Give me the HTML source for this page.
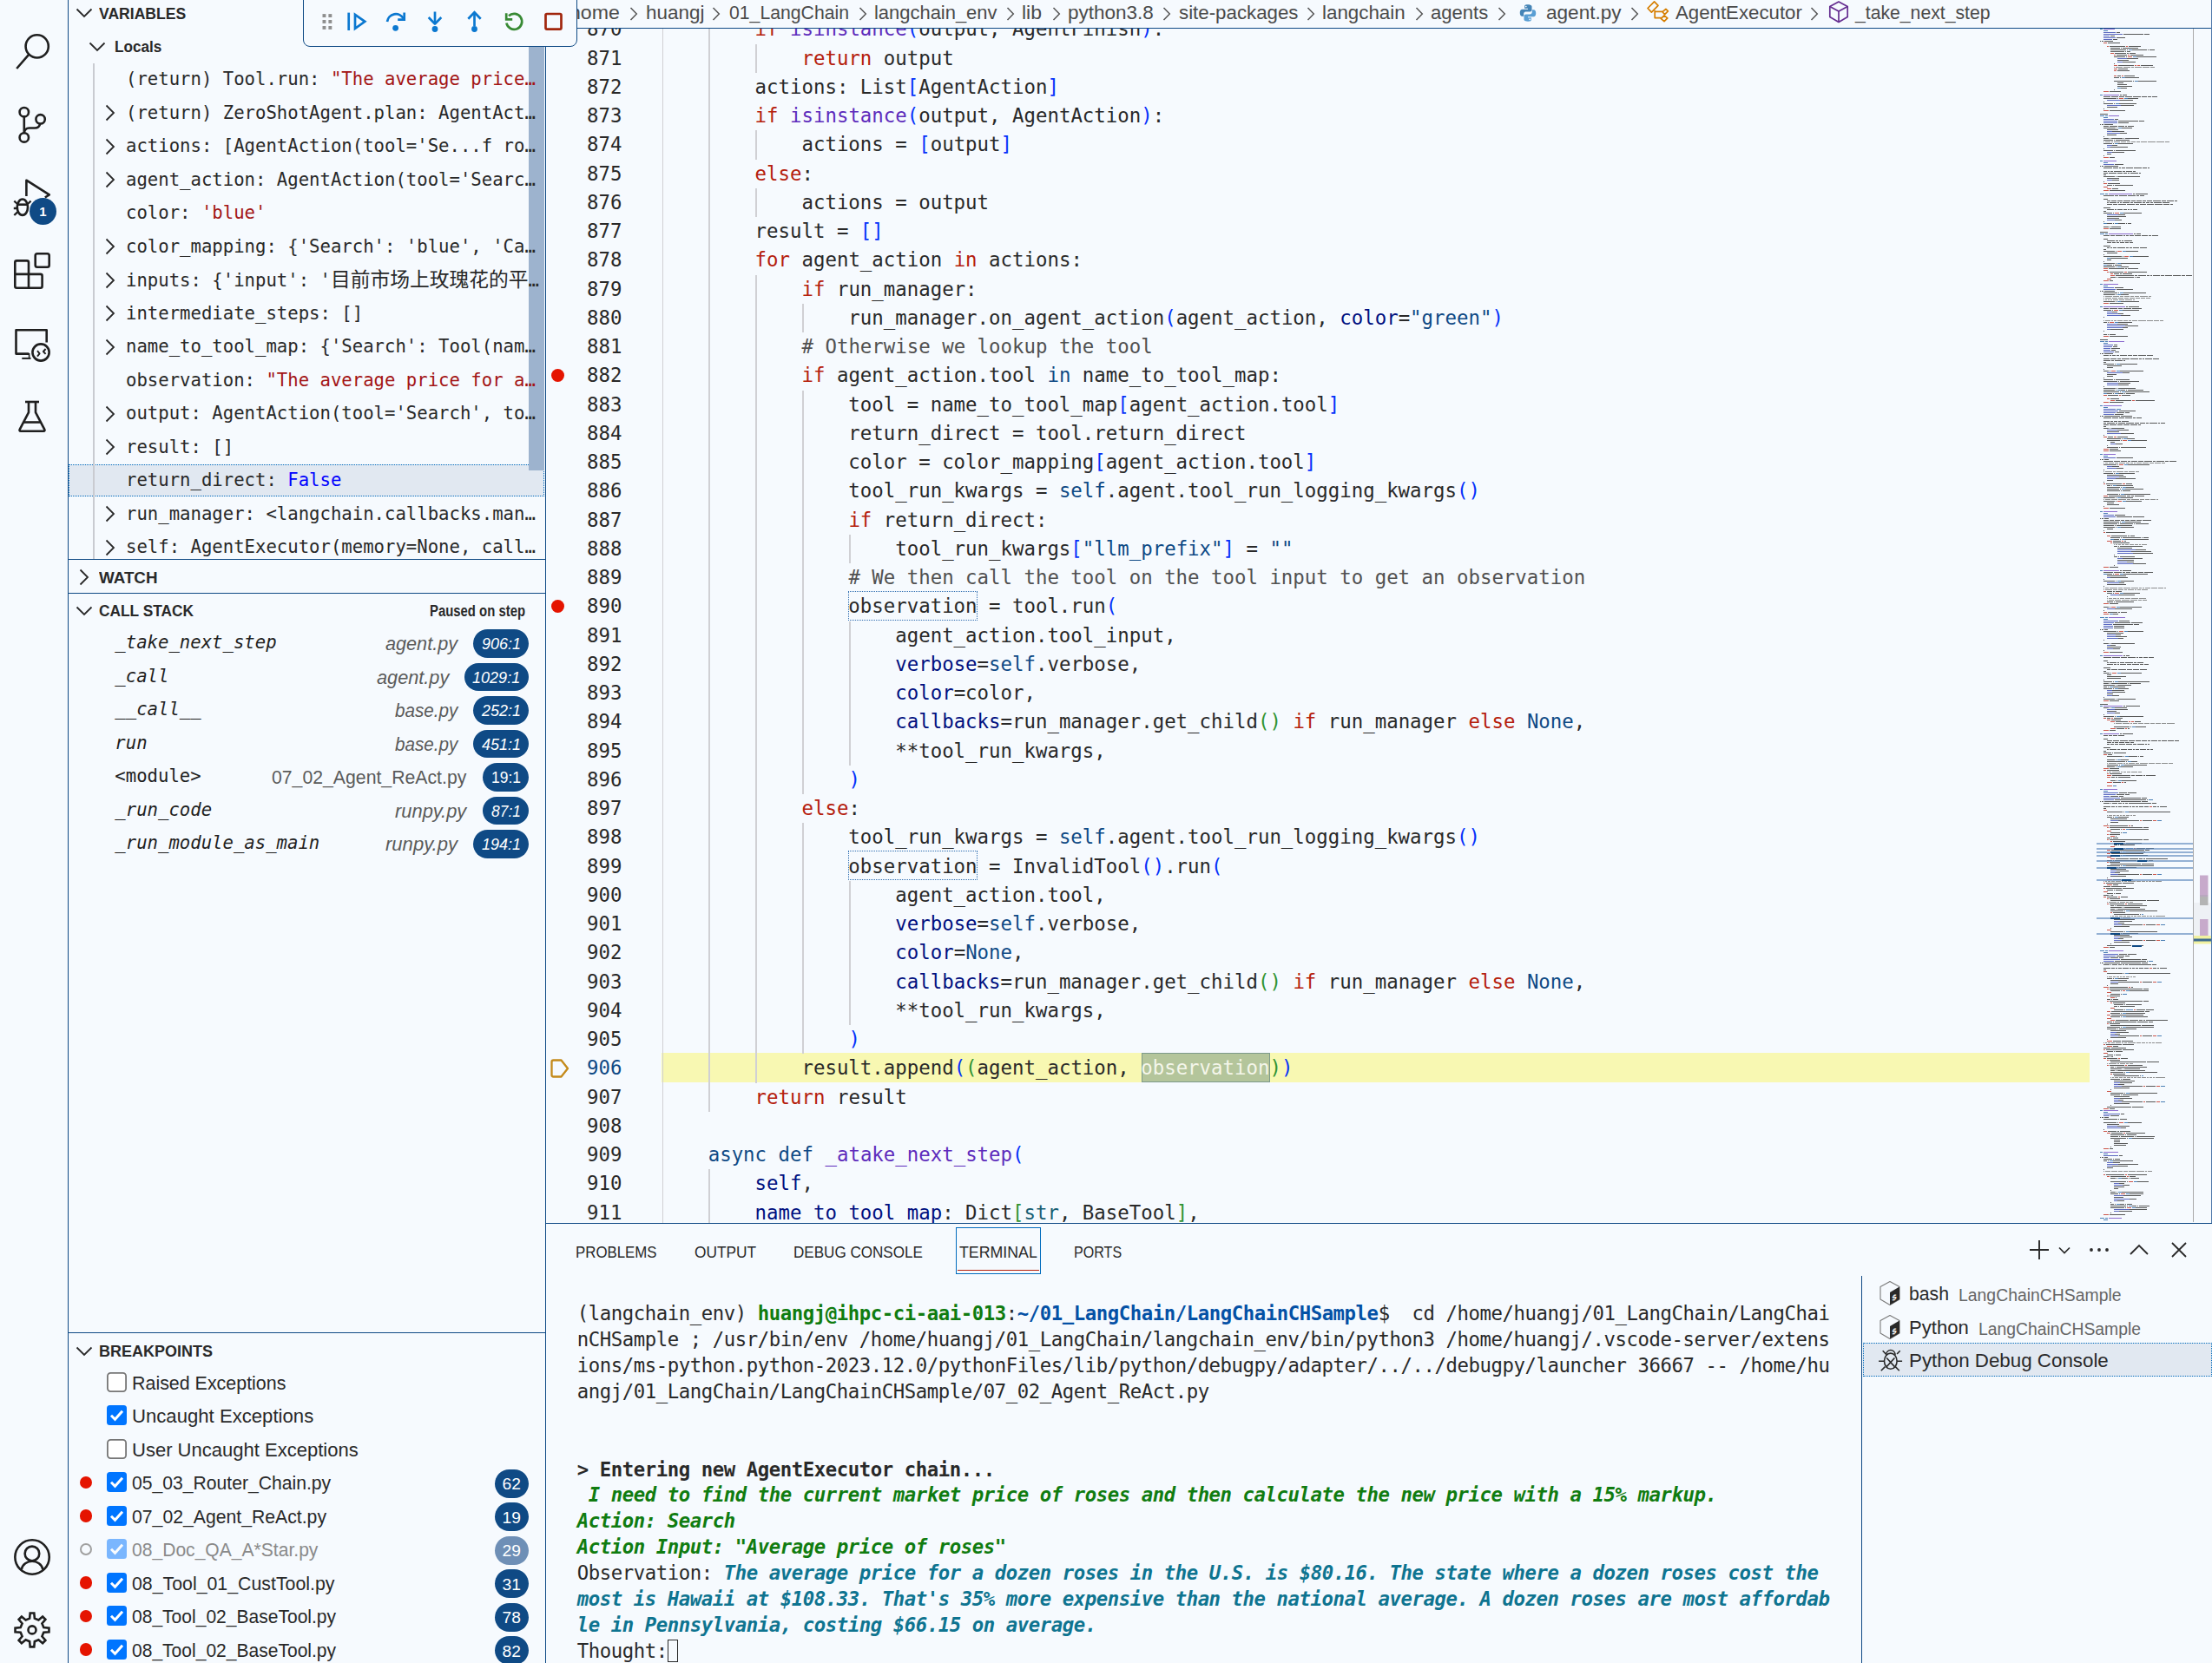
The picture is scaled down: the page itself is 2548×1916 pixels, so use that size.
<!DOCTYPE html><html><head><meta charset="utf-8"><title>agent.py - Visual Studio Code</title><style>
html,body{margin:0;padding:0;}
body{width:2548px;height:1916px;overflow:hidden;background:#F6FAFE;position:relative;font-family:"Liberation Sans","Noto Sans CJK SC",sans-serif;color:#292929;}
.t{position:absolute;white-space:pre;}
.m{font-family:"DejaVu Sans Mono","Liberation Mono","Noto Sans CJK SC",monospace;}
.abs{position:absolute;}
.cl{position:absolute;left:761.8px;height:33.25px;line-height:33.25px;font-size:22.38px;white-space:pre;letter-spacing:0.002px;}
.ln{position:absolute;left:640px;width:76.5px;text-align:right;height:33.25px;line-height:33.25px;font-size:22.38px;}
.vr{position:absolute;left:146.5px;height:38.5px;line-height:38.5px;font-size:20.64px;white-space:pre;}
.tl{position:absolute;left:664.7px;height:30px;line-height:30px;font-size:22.3px;white-space:pre;letter-spacing:-0.425px;}
.k{color:#B5200D} .b{color:#0F4A85} .f{color:#5E2CBC} .p{color:#001080} .c{color:#515151} .ty{color:#185E73}
.b1{color:#0431FA} .b2{color:#319331} .b3{color:#7B3814}
.s{color:#A31515} .bl{color:#0000FF}
.g{color:#107C10;font-weight:bold} .gi{color:#107C10;font-weight:bold;font-style:italic} .ci{color:#0E7490;font-weight:bold;font-style:italic} .pb{color:#0451A5;font-weight:bold}
</style></head><body>
<div class="abs" id="editor" style="left:629px;top:0;width:1919px;height:1408px;overflow:hidden;background:#F6FAFE">
</div>
<div class="abs" style="left:762px;top:1213.40px;width:1644.5px;height:33.25px;background:#F8F8B2"></div>
<div class="abs" style="left:1314.98px;top:1213.40px;width:148.22px;height:33.25px;background:#B4C59B;box-sizing:border-box;border:1px solid #7d9a8a"></div>
<div class="abs" style="left:762.50px;top:17.40px;width:1.8px;height:1396.50px;background:#D0D0D4"></div>
<div class="abs" style="left:816.40px;top:17.40px;width:1.8px;height:1263.50px;background:#D0D0D4"></div>
<div class="abs" style="left:816.40px;top:1347.40px;width:1.8px;height:66.50px;background:#D0D0D4"></div>
<div class="abs" style="left:870.30px;top:50.65px;width:1.8px;height:33.25px;background:#D0D0D4"></div>
<div class="abs" style="left:870.30px;top:150.40px;width:1.8px;height:33.25px;background:#D0D0D4"></div>
<div class="abs" style="left:870.30px;top:216.90px;width:1.8px;height:33.25px;background:#D0D0D4"></div>
<div class="abs" style="left:870.30px;top:316.65px;width:1.8px;height:931.00px;background:#D0D0D4"></div>
<div class="abs" style="left:924.20px;top:349.90px;width:1.8px;height:33.25px;background:#D0D0D4"></div>
<div class="abs" style="left:924.20px;top:449.65px;width:1.8px;height:465.50px;background:#D0D0D4"></div>
<div class="abs" style="left:924.20px;top:948.40px;width:1.8px;height:266.00px;background:#D0D0D4"></div>
<div class="abs" style="left:978.10px;top:615.90px;width:1.8px;height:33.25px;background:#D0D0D4"></div>
<div class="abs" style="left:978.10px;top:715.65px;width:1.8px;height:166.25px;background:#D0D0D4"></div>
<div class="abs" style="left:978.10px;top:1014.90px;width:1.8px;height:166.25px;background:#D0D0D4"></div>
<div class="abs" style="left:977.10px;top:681.20px;width:148.62px;height:33.65px;box-sizing:border-box;border:1px dotted #2F6DB0"></div>
<div class="abs" style="left:977.10px;top:980.45px;width:148.62px;height:33.65px;box-sizing:border-box;border:1px dotted #2F6DB0"></div>
<div class="ln m" style="top:17.40px;color:#292929">870</div>
<div class="cl m" style="top:17.40px">        <span class="k">if</span> <span class="f">isinstance</span><span class="b1">(</span>output, AgentFinish<span class="b1">)</span>:</div>
<div class="ln m" style="top:50.65px;color:#292929">871</div>
<div class="cl m" style="top:50.65px">            <span class="k">return</span> output</div>
<div class="ln m" style="top:83.90px;color:#292929">872</div>
<div class="cl m" style="top:83.90px">        actions: List<span class="b1">[</span>AgentAction<span class="b1">]</span></div>
<div class="ln m" style="top:117.15px;color:#292929">873</div>
<div class="cl m" style="top:117.15px">        <span class="k">if</span> <span class="f">isinstance</span><span class="b1">(</span>output, AgentAction<span class="b1">)</span>:</div>
<div class="ln m" style="top:150.40px;color:#292929">874</div>
<div class="cl m" style="top:150.40px">            actions = <span class="b1">[</span>output<span class="b1">]</span></div>
<div class="ln m" style="top:183.65px;color:#292929">875</div>
<div class="cl m" style="top:183.65px">        <span class="k">else</span>:</div>
<div class="ln m" style="top:216.90px;color:#292929">876</div>
<div class="cl m" style="top:216.90px">            actions = output</div>
<div class="ln m" style="top:250.15px;color:#292929">877</div>
<div class="cl m" style="top:250.15px">        result = <span class="b1">[]</span></div>
<div class="ln m" style="top:283.40px;color:#292929">878</div>
<div class="cl m" style="top:283.40px">        <span class="k">for</span> agent_action <span class="k">in</span> actions:</div>
<div class="ln m" style="top:316.65px;color:#292929">879</div>
<div class="cl m" style="top:316.65px">            <span class="k">if</span> run_manager:</div>
<div class="ln m" style="top:349.90px;color:#292929">880</div>
<div class="cl m" style="top:349.90px">                run_manager.on_agent_action<span class="b1">(</span>agent_action, <span class="p">color</span>=<span class="b">"green"</span><span class="b1">)</span></div>
<div class="ln m" style="top:383.15px;color:#292929">881</div>
<div class="cl m" style="top:383.15px">            <span class="c"># Otherwise we lookup the tool</span></div>
<div class="ln m" style="top:416.40px;color:#292929">882</div>
<div class="cl m" style="top:416.40px">            <span class="k">if</span> agent_action.tool <span class="b">in</span> name_to_tool_map:</div>
<div class="ln m" style="top:449.65px;color:#292929">883</div>
<div class="cl m" style="top:449.65px">                tool = name_to_tool_map<span class="b1">[</span>agent_action.tool<span class="b1">]</span></div>
<div class="ln m" style="top:482.90px;color:#292929">884</div>
<div class="cl m" style="top:482.90px">                return_direct = tool.return_direct</div>
<div class="ln m" style="top:516.15px;color:#292929">885</div>
<div class="cl m" style="top:516.15px">                color = color_mapping<span class="b1">[</span>agent_action.tool<span class="b1">]</span></div>
<div class="ln m" style="top:549.40px;color:#292929">886</div>
<div class="cl m" style="top:549.40px">                tool_run_kwargs = <span class="b">self</span>.agent.tool_run_logging_kwargs<span class="b1">()</span></div>
<div class="ln m" style="top:582.65px;color:#292929">887</div>
<div class="cl m" style="top:582.65px">                <span class="k">if</span> return_direct:</div>
<div class="ln m" style="top:615.90px;color:#292929">888</div>
<div class="cl m" style="top:615.90px">                    tool_run_kwargs<span class="b1">[</span><span class="b">"llm_prefix"</span><span class="b1">]</span> = <span class="b">""</span></div>
<div class="ln m" style="top:649.15px;color:#292929">889</div>
<div class="cl m" style="top:649.15px">                <span class="c"># We then call the tool on the tool input to get an observation</span></div>
<div class="ln m" style="top:682.40px;color:#292929">890</div>
<div class="cl m" style="top:682.40px">                observation = tool.run<span class="b1">(</span></div>
<div class="ln m" style="top:715.65px;color:#292929">891</div>
<div class="cl m" style="top:715.65px">                    agent_action.tool_input,</div>
<div class="ln m" style="top:748.90px;color:#292929">892</div>
<div class="cl m" style="top:748.90px">                    <span class="p">verbose</span>=<span class="b">self</span>.verbose,</div>
<div class="ln m" style="top:782.15px;color:#292929">893</div>
<div class="cl m" style="top:782.15px">                    <span class="p">color</span>=color,</div>
<div class="ln m" style="top:815.40px;color:#292929">894</div>
<div class="cl m" style="top:815.40px">                    <span class="p">callbacks</span>=run_manager.get_child<span class="b2">()</span> <span class="k">if</span> run_manager <span class="k">else</span> <span class="b">None</span>,</div>
<div class="ln m" style="top:848.65px;color:#292929">895</div>
<div class="cl m" style="top:848.65px">                    **tool_run_kwargs,</div>
<div class="ln m" style="top:881.90px;color:#292929">896</div>
<div class="cl m" style="top:881.90px">                <span class="b1">)</span></div>
<div class="ln m" style="top:915.15px;color:#292929">897</div>
<div class="cl m" style="top:915.15px">            <span class="k">else</span>:</div>
<div class="ln m" style="top:948.40px;color:#292929">898</div>
<div class="cl m" style="top:948.40px">                tool_run_kwargs = <span class="b">self</span>.agent.tool_run_logging_kwargs<span class="b1">()</span></div>
<div class="ln m" style="top:981.65px;color:#292929">899</div>
<div class="cl m" style="top:981.65px">                observation = InvalidTool<span class="b1">()</span>.run<span class="b1">(</span></div>
<div class="ln m" style="top:1014.90px;color:#292929">900</div>
<div class="cl m" style="top:1014.90px">                    agent_action.tool,</div>
<div class="ln m" style="top:1048.15px;color:#292929">901</div>
<div class="cl m" style="top:1048.15px">                    <span class="p">verbose</span>=<span class="b">self</span>.verbose,</div>
<div class="ln m" style="top:1081.40px;color:#292929">902</div>
<div class="cl m" style="top:1081.40px">                    <span class="p">color</span>=<span class="b">None</span>,</div>
<div class="ln m" style="top:1114.65px;color:#292929">903</div>
<div class="cl m" style="top:1114.65px">                    <span class="p">callbacks</span>=run_manager.get_child<span class="b2">()</span> <span class="k">if</span> run_manager <span class="k">else</span> <span class="b">None</span>,</div>
<div class="ln m" style="top:1147.90px;color:#292929">904</div>
<div class="cl m" style="top:1147.90px">                    **tool_run_kwargs,</div>
<div class="ln m" style="top:1181.15px;color:#292929">905</div>
<div class="cl m" style="top:1181.15px">                <span class="b1">)</span></div>
<div class="ln m" style="top:1214.40px;color:#0F4A85">906</div>
<div class="cl m" style="top:1214.40px">            result.append<span class="b1">(</span><span class="b2">(</span>agent_action, <span style="color:#F4F6EA">observation</span><span class="b2">)</span><span class="b1">)</span></div>
<div class="ln m" style="top:1247.65px;color:#292929">907</div>
<div class="cl m" style="top:1247.65px">        <span class="k">return</span> result</div>
<div class="ln m" style="top:1280.90px;color:#292929">908</div>
<div class="ln m" style="top:1314.15px;color:#292929">909</div>
<div class="cl m" style="top:1314.15px">    <span class="b">async</span> <span class="b">def</span> <span class="f">_atake_next_step</span><span class="b1">(</span></div>
<div class="ln m" style="top:1347.40px;color:#292929">910</div>
<div class="cl m" style="top:1347.40px">        <span class="p">self</span>,</div>
<div class="ln m" style="top:1380.65px;color:#292929">911</div>
<div class="cl m" style="top:1380.65px">        <span class="p">name_to_tool_map</span>: Dict<span class="b2">[</span><span class="ty">str</span>, BaseTool<span class="b2">]</span>,</div>
<div class="abs" style="left:635.1px;top:424.52px;width:15px;height:15px;border-radius:50%;background:#E51400"></div>
<div class="abs" style="left:635.1px;top:690.52px;width:15px;height:15px;border-radius:50%;background:#E51400"></div>
<svg class="abs" style="left:630.5px;top:1216.53px" width="28" height="28" viewBox="0 0 28 28"><path d="M6.5 4.500 H15.500 L23 14 L15.500 23.500 H6.500 Q4.500 23.500 4.500 21.500 V6.500 Q4.500 4.500 6.500 4.500 Z" fill="none" stroke="#C48A1A" stroke-width="2.300" stroke-linejoin="round"/></svg>
<svg class="abs" style="left:0;top:0" width="2548" height="1409" viewBox="0 0 2548 1409">
<path d="M2438 37.5h4M2446 39.5h23M2470 39.5h6M2431 41.5h5M2438 43.5h10M2434 45.5h5M2419 47.5h1M2421 47.5h2M2424 47.5h10M2428 49.5h14M2430 53.5h18M2452 53.5h14M2431 55.5h11M2443 55.5h1M2445 55.5h18M2431 57.5h18M2450 57.5h1M2456 57.5h17M2474 57.5h1M2476 57.5h6M2431 59.5h16M2448 59.5h1M2450 59.5h4M2436 61.5h13M2450 61.5h2M2453 61.5h7M2438 63.5h12M2454 63.5h15M2435 65.5h13M2449 65.5h1M2461 65.5h23M2450 67.5h13M2439 69.5h13M2445 71.5h15M2435 73.5h1M2440 75.5h18M2466 75.5h14M2440 79.5h11M2439 81.5h14M2439 87.5h4M2447 87.5h12M2435 89.5h6M2442 89.5h1M2448 89.5h16M2435 93.5h21M2457 93.5h1M2463 93.5h21M2439 95.5h7M2439 97.5h11M2439 99.5h17M2443 101.5h7M2435 103.5h1M2430 105.5h13M2442 109.5h2M2445 109.5h5M2423 111.5h8M2432 111.5h8M2441 111.5h6M2448 111.5h8M2457 111.5h9M2467 111.5h6M2474 111.5h4M2479 111.5h6M2423 113.5h15M2439 113.5h1M2451 113.5h12M2442 115.5h15M2423 117.5h1M2423 119.5h11M2435 119.5h1M2441 119.5h20M2443 121.5h15M2427 123.5h12M2423 125.5h1M2430 127.5h18M2419 131.5h9M2436 137.5h4M2440 139.5h23M2464 139.5h6M2440 141.5h12M2419 143.5h1M2421 143.5h2M2424 143.5h10M2423 145.5h6M2430 145.5h9M2440 145.5h7M2448 145.5h2M2451 145.5h7M2423 147.5h14M2438 147.5h1M2444 147.5h12M2427 149.5h13M2433 151.5h14M2442 153.5h8M2427 155.5h11M2423 157.5h1M2423 159.5h6M2430 159.5h1M2432 159.5h13M2446 159.5h1M2448 159.5h16M2423 161.5h11M2435 161.5h1M2437 161.5h16M2423 165.5h10M2434 165.5h1M2440 165.5h17M2433 167.5h6M2431 169.5h20M2423 171.5h1M2423 173.5h11M2435 173.5h1M2437 173.5h23M2433 175.5h14M2427 177.5h5M2423 179.5h1M2430 181.5h6M2436 189.5h10M2419 191.5h1M2421 191.5h2M2424 191.5h16M2423 193.5h10M2434 193.5h6M2441 193.5h2M2444 193.5h4M2449 193.5h8M2458 193.5h9M2468 193.5h5M2474 193.5h2M2423 197.5h4M2428 197.5h2M2431 197.5h3M2435 197.5h9M2445 197.5h3M2449 197.5h7M2457 197.5h3M2423 199.5h5M2429 199.5h9M2439 199.5h6M2446 199.5h4M2451 199.5h2M2454 199.5h9M2464 199.5h2M2423 201.5h3M2423 203.5h13M2437 203.5h1M2439 203.5h26M2427 205.5h14M2433 207.5h8M2423 209.5h1M2428 211.5h14M2427 213.5h6M2434 213.5h1M2436 213.5h21M2433 217.5h7M2430 219.5h18M2457 223.5h2M2460 223.5h14M2423 225.5h12M2436 225.5h4M2441 225.5h9M2451 225.5h9M2461 225.5h3M2465 225.5h5M2423 229.5h5M2427 231.5h4M2432 231.5h6M2439 231.5h6M2446 231.5h8M2455 231.5h5M2461 231.5h6M2468 231.5h4M2473 231.5h6M2480 231.5h9M2490 231.5h5M2496 231.5h8M2505 231.5h3M2427 233.5h2M2430 233.5h8M2439 233.5h2M2442 233.5h2M2445 233.5h8M2454 233.5h3M2458 233.5h9M2468 233.5h3M2472 233.5h4M2477 233.5h3M2481 233.5h9M2491 233.5h8M2427 235.5h6M2434 235.5h5M2440 235.5h9M2450 235.5h9M2460 235.5h4M2465 235.5h7M2473 235.5h8M2482 235.5h9M2492 235.5h7M2500 235.5h3M2423 239.5h8M2427 241.5h8M2436 241.5h2M2439 241.5h6M2446 241.5h4M2451 241.5h2M2454 241.5h2M2457 241.5h5M2423 243.5h3M2423 245.5h10M2434 245.5h1M2446 245.5h21M2440 247.5h8M2427 249.5h22M2427 251.5h14M2436 253.5h8M2423 255.5h1M2427 257.5h6M2434 257.5h1M2440 257.5h8M2449 257.5h1M2451 257.5h4M2423 261.5h6M2430 261.5h1M2432 261.5h11M2430 263.5h13M2419 267.5h9M2458 269.5h2M2461 269.5h5M2423 271.5h7M2431 271.5h5M2437 271.5h8M2446 271.5h2M2449 271.5h3M2453 271.5h5M2459 271.5h7M2467 271.5h7M2475 271.5h3M2479 271.5h7M2423 275.5h5M2427 277.5h9M2437 277.5h3M2441 277.5h2M2444 277.5h2M2447 277.5h9M2427 279.5h5M2433 279.5h4M2438 279.5h3M2442 279.5h5M2448 279.5h4M2453 279.5h4M2423 283.5h8M2427 285.5h3M2431 285.5h2M2434 285.5h4M2439 285.5h9M2449 285.5h3M2453 285.5h3M2457 285.5h7M2465 285.5h8M2423 287.5h3M2423 289.5h13M2437 289.5h1M2449 289.5h14M2427 291.5h12M2423 293.5h1M2423 295.5h21M2445 295.5h1M2457 295.5h18M2431 297.5h20M2427 299.5h5M2423 301.5h1M2423 303.5h13M2437 303.5h1M2443 303.5h22M2427 305.5h6M2434 305.5h1M2436 305.5h8M2423 307.5h13M2437 307.5h1M2443 307.5h9M2429 309.5h18M2448 309.5h2M2451 309.5h12M2430 313.5h16M2451 313.5h22M2435 315.5h6M2442 315.5h2M2445 315.5h11M2437 317.5h21M2459 317.5h3M2463 317.5h9M2473 317.5h3M2477 317.5h2M2480 317.5h8M2489 317.5h4M2494 317.5h8M2503 317.5h9M2513 317.5h4M2518 317.5h7.0M2431 319.5h6M2438 319.5h1M2440 319.5h18M2459 319.5h1M2461 319.5h4M2430 323.5h4M2436 331.5h10M2438 333.5h19M2419 335.5h1M2421 335.5h2M2424 335.5h12M2423 337.5h16M2440 337.5h1M2446 337.5h26M2423 339.5h13M2437 339.5h1M2443 339.5h9M2423 347.5h13M2437 347.5h1M2443 347.5h21M2430 349.5h16M2449 353.5h2M2452 353.5h12M2423 355.5h6M2430 355.5h9M2440 355.5h5M2446 355.5h9M2456 355.5h11M2423 357.5h9M2433 357.5h1M2445 357.5h19M2433 359.5h6M2440 361.5h6M2443 363.5h11M2423 365.5h1M2423 371.5h4M2428 371.5h1M2440 371.5h16M2439 373.5h12M2448 375.5h15M2445 377.5h6M2431 379.5h15M2423 381.5h1M2423 385.5h4M2428 385.5h1M2430 385.5h7M2430 387.5h21M2419 391.5h9M2435 397.5h4M2434 399.5h5M2432 401.5h10M2432 403.5h5M2436 405.5h5M2419 407.5h1M2421 407.5h2M2424 407.5h10M2423 409.5h6M2430 409.5h2M2433 409.5h4M2438 409.5h3M2442 409.5h8M2451 409.5h5M2457 409.5h5M2463 409.5h9M2473 409.5h7M2423 413.5h7M2431 413.5h7M2439 413.5h4M2444 413.5h9M2454 413.5h9M2464 413.5h3M2468 413.5h2M2471 413.5h8M2480 413.5h7M2423 415.5h8M2432 415.5h3M2436 415.5h9M2446 415.5h2M2423 417.5h3M2423 419.5h12M2436 419.5h1M2442 419.5h20M2427 421.5h17M2427 423.5h7M2423 425.5h1M2423 427.5h6M2430 427.5h1M2442 427.5h27M2445 429.5h8M2427 431.5h11M2427 433.5h7M2423 435.5h1M2423 437.5h11M2435 437.5h1M2437 437.5h16M2423 439.5h16M2440 439.5h1M2442 439.5h22M2440 441.5h14M2440 443.5h12M2423 445.5h1M2423 447.5h14M2438 447.5h1M2440 447.5h20M2423 449.5h13M2437 449.5h1M2443 449.5h5M2449 449.5h1M2451 449.5h18M2423 451.5h18M2442 451.5h1M2448 451.5h28M2427 453.5h6M2434 453.5h1M2440 453.5h6M2447 453.5h1M2449 453.5h10M2428 455.5h12M2444 455.5h10M2431 459.5h10M2437 461.5h18M2460 461.5h22M2430 463.5h16M2441 473.5h19M2438 475.5h9M2448 475.5h5M2436 477.5h10M2419 479.5h1M2421 479.5h2M2424 479.5h18M2443 479.5h13M2423 481.5h9M2433 481.5h7M2441 481.5h6M2448 481.5h8M2457 481.5h3M2461 481.5h6M2423 485.5h7M2431 485.5h3M2435 485.5h4M2440 485.5h3M2444 485.5h8M2423 487.5h3M2427 487.5h9M2437 487.5h2M2440 487.5h8M2449 487.5h9M2459 487.5h5M2465 487.5h6M2472 487.5h3M2476 487.5h9M2486 487.5h2M2489 487.5h5M2423 489.5h6M2430 489.5h8M2439 489.5h6M2446 489.5h7M2454 489.5h8M2463 489.5h3M2423 491.5h3M2423 493.5h6M2430 493.5h1M2432 493.5h15M2439 495.5h13M2427 497.5h14M2443 499.5h15M2423 501.5h1M2428 503.5h6M2439 503.5h12M2427 505.5h16M2444 505.5h1M2450 505.5h9M2427 507.5h15M2443 507.5h1M2455 507.5h18M2431 509.5h5M2437 511.5h8M2427 513.5h1M2427 515.5h13M2441 515.5h1M2443 515.5h29M2430 517.5h10M2430 519.5h13M2438 527.5h19M2419 529.5h1M2421 529.5h2M2424 529.5h5M2423 531.5h11M2435 531.5h7M2443 531.5h7M2451 531.5h3M2455 531.5h7M2463 531.5h6M2470 531.5h9M2480 531.5h3M2484 531.5h9M2494 531.5h4M2499 531.5h8M2423 535.5h15M2439 535.5h1M2451 535.5h25M2433 537.5h8M2438 539.5h8M2423 541.5h1M2423 545.5h11M2435 545.5h1M2441 545.5h18M2427 547.5h19M2441 549.5h8M2437 551.5h23M2427 553.5h7M2423 555.5h1M2426 557.5h18M2449 557.5h7M2427 559.5h4M2432 559.5h1M2438 559.5h19M2427 561.5h15M2443 561.5h1M2449 561.5h9M2427 563.5h14M2442 563.5h1M2448 563.5h21M2427 565.5h15M2443 565.5h1M2445 565.5h9M2427 569.5h13M2441 569.5h1M2447 569.5h30M2429 571.5h20M2450 571.5h4M2455 571.5h3M2459 571.5h11M2423 573.5h13M2437 573.5h1M2443 573.5h14M2423 577.5h13M2437 577.5h1M2449 577.5h18M2427 579.5h8M2427 581.5h14M2423 583.5h1M2430 585.5h18M2436 593.5h12M2438 595.5h18M2457 595.5h13M2419 597.5h1M2421 597.5h2M2424 597.5h5M2423 599.5h6M2430 599.5h5M2436 599.5h6M2443 599.5h4M2448 599.5h5M2454 599.5h6M2461 599.5h6M2468 599.5h10M2423 601.5h18M2442 601.5h1M2448 601.5h18M2423 603.5h16M2440 603.5h1M2442 603.5h15M2458 603.5h1M2460 603.5h15M2423 605.5h12M2436 605.5h1M2438 605.5h18M2423 607.5h13M2437 607.5h1M2443 607.5h15M2427 609.5h7M2423 611.5h1M2426 613.5h22M2432 617.5h18M2451 617.5h2M2454 617.5h5M2431 619.5h11M2443 619.5h1M2445 619.5h21M2467 619.5h1M2469 619.5h6M2435 621.5h6M2442 621.5h1M2448 621.5h27M2434 623.5h9M2447 623.5h2M2434 625.5h19M2435 629.5h4M2440 629.5h1M2442 629.5h26M2439 631.5h17M2460 633.5h12M2455 635.5h23M2457 637.5h23M2435 639.5h1M2435 641.5h4M2440 641.5h1M2442 641.5h17M2445 643.5h23M2439 645.5h19M2450 647.5h8M2457 649.5h15M2435 651.5h1M2430 653.5h10M2442 657.5h2M2445 657.5h10M2423 659.5h11M2435 659.5h9M2445 659.5h3M2449 659.5h5M2455 659.5h7M2463 659.5h6M2470 659.5h10M2427 661.5h6M2434 661.5h1M2446 661.5h28M2427 663.5h22M2431 665.5h20M2423 667.5h1M2423 669.5h13M2437 669.5h1M2443 669.5h15M2441 671.5h6M2427 673.5h22M2423 675.5h1M2427 681.5h6M2434 681.5h2M2437 681.5h7M2427 683.5h6M2434 683.5h1M2446 683.5h19M2441 685.5h18M2427 687.5h1M2427 693.5h7M2435 693.5h1M2437 693.5h21M2430 695.5h10M2423 699.5h6M2430 699.5h1M2442 699.5h25M2436 701.5h20M2423 703.5h1M2428 705.5h11M2440 705.5h2M2443 705.5h7M2434 707.5h6M2441 715.5h12M2436 717.5h18M2455 717.5h13M2434 719.5h23M2458 719.5h6M2435 721.5h12M2435 723.5h12M2419 725.5h1M2421 725.5h2M2424 725.5h4M2423 727.5h15M2439 727.5h1M2451 727.5h18M2427 729.5h19M2437 731.5h6M2437 733.5h13M2440 735.5h6M2423 737.5h1M2423 741.5h6M2430 741.5h1M2432 741.5h27M2431 743.5h6M2427 745.5h16M2434 747.5h8M2423 749.5h1M2430 751.5h15M2446 755.5h2M2449 755.5h4M2423 757.5h9M2433 757.5h9M2443 757.5h7M2451 757.5h9M2461 757.5h2M2464 757.5h4M2469 757.5h5M2475 757.5h6M2423 761.5h5M2427 763.5h2M2430 763.5h8M2439 763.5h2M2442 763.5h5M2448 763.5h9M2458 763.5h3M2462 763.5h7M2427 765.5h7M2435 765.5h3M2439 765.5h2M2442 765.5h7M2450 765.5h5M2456 765.5h8M2465 765.5h4M2470 765.5h5M2423 769.5h8M2427 771.5h4M2432 771.5h7M2440 771.5h9M2450 771.5h6M2457 771.5h7M2465 771.5h8M2423 773.5h3M2423 775.5h7M2431 775.5h1M2443 775.5h24M2427 777.5h5M2427 779.5h22M2427 781.5h16M2423 783.5h1M2423 785.5h10M2434 785.5h1M2440 785.5h36M2423 787.5h6M2430 787.5h1M2432 787.5h18M2451 787.5h1M2453 787.5h13M2423 789.5h13M2437 789.5h1M2439 789.5h16M2423 791.5h4M2428 791.5h1M2434 791.5h14M2423 793.5h10M2434 793.5h1M2440 793.5h12M2433 795.5h14M2433 797.5h15M2427 799.5h7M2433 801.5h8M2423 803.5h1M2423 805.5h13M2437 805.5h1M2439 805.5h21M2430 807.5h11M2419 811.5h9M2446 813.5h2M2449 813.5h16M2423 815.5h6M2430 815.5h1M2436 815.5h14M2436 817.5h15M2427 819.5h11M2436 821.5h6M2423 823.5h1M2423 825.5h12M2436 825.5h1M2442 825.5h27M2427 827.5h4M2435 827.5h10M2432 829.5h11M2437 831.5h14M2459 831.5h7M2435 837.5h18M2454 837.5h1M2460 837.5h12M2438 839.5h9M2451 839.5h2M2430 841.5h7M2442 845.5h2M2445 845.5h12M2423 847.5h5M2429 847.5h4M2434 847.5h5M2440 847.5h7M2423 851.5h5M2427 853.5h6M2434 853.5h7M2442 853.5h9M2452 853.5h7M2460 853.5h6M2467 853.5h6M2474 853.5h3M2478 853.5h7M2486 853.5h3M2490 853.5h6M2497 853.5h7M2505 853.5h5M2427 855.5h5M2433 855.5h2M2436 855.5h4M2441 855.5h6M2448 855.5h5M2454 855.5h4M2427 857.5h3M2431 857.5h4M2436 857.5h4M2441 857.5h7M2449 857.5h7M2457 857.5h4M2462 857.5h8M2471 857.5h2M2474 857.5h2M2423 861.5h8M2427 863.5h2M2430 863.5h8M2439 863.5h3M2443 863.5h7M2451 863.5h5M2457 863.5h2M2460 863.5h4M2465 863.5h7M2473 863.5h3M2477 863.5h3M2423 865.5h3M2423 867.5h9M2433 867.5h1M2435 867.5h14M2428 869.5h5M2427 871.5h18M2446 871.5h1M2452 871.5h10M2463 871.5h1M2465 871.5h4M2427 875.5h9M2437 875.5h1M2443 875.5h9M2427 877.5h21M2449 877.5h1M2455 877.5h7M2427 881.5h13M2441 881.5h1M2447 881.5h26M2427 883.5h9M2437 883.5h1M2443 883.5h14M2430 885.5h11M2427 887.5h14M2430 891.5h14M2433 893.5h21M2455 893.5h4M2460 893.5h8M2469 893.5h2M2472 893.5h11M2432 895.5h4M2437 895.5h2M2440 895.5h14M2431 899.5h6M2438 899.5h1M2444 899.5h17M2434 901.5h9M2447 901.5h2M2441 913.5h9M2451 913.5h10M2438 915.5h9M2448 915.5h5M2431 917.5h9M2441 917.5h5M2443 919.5h23M2467 919.5h6M2436 921.5h36M2473 921.5h1M2419 923.5h1M2421 923.5h2M2424 923.5h18M2443 923.5h23M2467 923.5h7M2423 925.5h7M2431 925.5h1M2433 925.5h6M2440 925.5h4M2445 925.5h2M2448 925.5h3M2452 925.5h26M2479 925.5h5M2423 929.5h8M2432 929.5h4M2437 929.5h2M2440 929.5h4M2445 929.5h7M2453 929.5h2M2456 929.5h3M2460 929.5h3M2464 929.5h5M2470 929.5h5M2480 929.5h4M2485 929.5h2M2488 929.5h8M2423 931.5h3M2427 935.5h18M2446 935.5h1M2452 935.5h48M2427 941.5h6M2434 941.5h1M2440 941.5h12M2431 943.5h19M2440 945.5h24M2468 945.5h11M2431 947.5h9M2427 949.5h1M2430 951.5h21M2455 951.5h2M2430 953.5h38M2469 953.5h6M2431 955.5h11M2443 955.5h1M2453 955.5h22M2431 959.5h11M2443 959.5h1M2430 961.5h12M2437 963.5h1M2427 965.5h4M2432 965.5h1M2434 965.5h6M2430 967.5h38M2469 967.5h6M2434 969.5h14M2435 971.5h11M2447 971.5h1M2449 971.5h18M2435 973.5h4M2440 973.5h1M2442 973.5h17M2435 977.5h11M2447 977.5h1M2461 977.5h10M2472 977.5h9M2432 979.5h38M2471 979.5h5M2431 981.5h11M2443 981.5h1M2449 981.5h22M2432 983.5h37M2431 985.5h11M2443 985.5h1M2449 985.5h25M2437 989.5h15M2453 989.5h10M2464 989.5h4M2469 989.5h2M2472 989.5h25M2427 991.5h6M2434 991.5h1M2436 991.5h25M2462 991.5h12M2475 991.5h5M2430 993.5h12M2431 995.5h35M2467 995.5h14M2427 997.5h15M2443 997.5h1M2449 997.5h32M2427 999.5h11M2439 999.5h1M2441 999.5h20M2431 1001.5h18M2438 1003.5h14M2436 1005.5h6M2440 1007.5h24M2468 1007.5h11M2431 1009.5h18M2427 1011.5h1M2434 1013.5h9M2444 1013.5h13M2426 1017.5h18M2445 1017.5h13M2434 1019.5h6M2423 1021.5h8M2432 1021.5h17M2426 1023.5h18M2445 1023.5h13M2427 1025.5h7M2435 1025.5h1M2437 1025.5h8M2427 1029.5h7M2435 1029.5h1M2437 1029.5h6M2423 1031.5h6M2430 1031.5h1M2432 1031.5h2M2427 1033.5h12M2443 1033.5h8M2430 1035.5h12M2431 1037.5h41M2473 1037.5h14M2430 1041.5h17M2451 1041.5h17M2431 1043.5h4M2436 1043.5h1M2438 1043.5h35M2431 1045.5h13M2445 1045.5h1M2447 1045.5h18M2431 1047.5h5M2437 1047.5h1M2439 1047.5h32M2431 1049.5h15M2447 1049.5h1M2453 1049.5h32M2434 1051.5h14M2435 1053.5h29M2465 1053.5h1M2431 1057.5h11M2443 1057.5h1M2445 1057.5h9M2435 1059.5h24M2442 1061.5h14M2440 1063.5h7M2444 1065.5h24M2472 1065.5h11M2435 1067.5h18M2431 1069.5h1M2431 1073.5h15M2447 1073.5h1M2453 1073.5h32M2431 1075.5h11M2443 1075.5h1M2445 1075.5h18M2435 1077.5h18M2442 1079.5h14M2440 1081.5h6M2444 1083.5h24M2472 1083.5h11M2435 1085.5h18M2431 1087.5h1M2427 1089.5h28M2456 1089.5h13M2430 1091.5h6M2441 1099.5h9M2451 1099.5h10M2438 1101.5h9M2448 1101.5h5M2431 1103.5h9M2441 1103.5h5M2443 1105.5h23M2467 1105.5h6M2436 1107.5h36M2473 1107.5h1M2419 1109.5h1M2421 1109.5h2M2424 1109.5h18M2443 1109.5h23M2467 1109.5h7M2423 1111.5h7M2431 1111.5h1M2433 1111.5h6M2440 1111.5h4M2445 1111.5h2M2448 1111.5h3M2452 1111.5h26M2479 1111.5h5M2423 1115.5h8M2432 1115.5h4M2437 1115.5h2M2440 1115.5h4M2445 1115.5h7M2453 1115.5h2M2456 1115.5h3M2460 1115.5h3M2464 1115.5h5M2470 1115.5h5M2480 1115.5h4M2485 1115.5h2M2488 1115.5h8M2423 1117.5h3M2427 1121.5h18M2446 1121.5h1M2452 1121.5h48M2427 1127.5h6M2434 1127.5h1M2440 1127.5h12M2431 1129.5h19M2440 1131.5h24M2468 1131.5h11M2431 1133.5h9M2427 1135.5h1M2430 1137.5h21M2455 1137.5h2M2430 1139.5h38M2469 1139.5h6M2431 1141.5h11M2443 1141.5h1M2453 1141.5h22M2431 1145.5h11M2443 1145.5h1M2430 1147.5h12M2437 1149.5h1M2427 1151.5h4M2432 1151.5h1M2434 1151.5h6M2430 1153.5h38M2469 1153.5h6M2434 1155.5h14M2435 1157.5h11M2447 1157.5h1M2449 1157.5h18M2435 1159.5h4M2440 1159.5h1M2442 1159.5h17M2435 1163.5h11M2447 1163.5h1M2461 1163.5h10M2472 1163.5h9M2432 1165.5h38M2471 1165.5h5M2431 1167.5h11M2443 1167.5h1M2449 1167.5h22M2432 1169.5h37M2431 1171.5h11M2443 1171.5h1M2449 1171.5h25M2437 1175.5h15M2453 1175.5h10M2464 1175.5h4M2469 1175.5h2M2472 1175.5h25M2427 1177.5h6M2434 1177.5h1M2436 1177.5h25M2462 1177.5h12M2475 1177.5h5M2430 1179.5h12M2431 1181.5h35M2467 1181.5h14M2427 1183.5h15M2443 1183.5h1M2449 1183.5h32M2427 1185.5h11M2439 1185.5h1M2441 1185.5h20M2431 1187.5h18M2438 1189.5h14M2436 1191.5h6M2440 1193.5h24M2468 1193.5h11M2431 1195.5h18M2427 1197.5h1M2434 1199.5h9M2444 1199.5h13M2426 1203.5h18M2445 1203.5h13M2434 1205.5h6M2423 1207.5h8M2432 1207.5h17M2426 1209.5h18M2445 1209.5h13M2427 1211.5h7M2435 1211.5h1M2437 1211.5h8M2427 1215.5h7M2435 1215.5h1M2437 1215.5h6M2423 1217.5h6M2430 1217.5h1M2432 1217.5h2M2427 1219.5h12M2443 1219.5h8M2430 1221.5h12M2431 1223.5h41M2473 1223.5h14M2430 1227.5h17M2451 1227.5h17M2431 1229.5h4M2436 1229.5h1M2438 1229.5h35M2431 1231.5h13M2445 1231.5h1M2447 1231.5h18M2431 1233.5h5M2437 1233.5h1M2439 1233.5h32M2431 1235.5h15M2447 1235.5h1M2453 1235.5h32M2434 1237.5h14M2435 1239.5h29M2465 1239.5h1M2431 1243.5h11M2443 1243.5h1M2445 1243.5h9M2435 1245.5h24M2442 1247.5h14M2440 1249.5h7M2444 1251.5h24M2472 1251.5h11M2435 1253.5h18M2431 1255.5h1M2431 1259.5h15M2447 1259.5h1M2453 1259.5h32M2431 1261.5h11M2443 1261.5h1M2445 1261.5h18M2435 1263.5h18M2442 1265.5h14M2440 1267.5h6M2444 1269.5h24M2472 1269.5h11M2435 1271.5h18M2431 1273.5h1M2427 1275.5h28M2456 1275.5h13M2430 1277.5h6M2443 1283.5h4M2431 1285.5h10M2419 1287.5h1M2421 1287.5h2M2424 1287.5h5M2423 1289.5h16M2440 1289.5h1M2442 1289.5h8M2423 1293.5h15M2439 1293.5h1M2451 1293.5h16M2427 1295.5h14M2439 1297.5h14M2443 1299.5h6M2423 1301.5h1M2428 1303.5h10M2439 1303.5h2M2442 1303.5h12M2432 1305.5h13M2449 1305.5h22M2431 1307.5h16M2448 1307.5h1M2450 1307.5h11M2431 1309.5h9M2441 1309.5h1M2443 1309.5h15M2459 1309.5h1M2461 1309.5h21M2431 1311.5h18M2450 1311.5h1M2456 1311.5h25M2435 1313.5h7M2435 1315.5h7M2435 1317.5h16M2435 1319.5h14M2431 1321.5h1M2430 1323.5h4M2441 1331.5h4M2419 1333.5h1M2421 1333.5h2M2424 1333.5h4M2423 1335.5h10M2434 1335.5h1M2436 1335.5h6M2423 1337.5h4M2428 1337.5h1M2434 1337.5h23M2434 1339.5h8M2440 1341.5h23M2433 1343.5h18M2427 1345.5h7M2423 1347.5h1M2426 1353.5h21M2451 1353.5h22M2431 1355.5h18M2453 1355.5h7M2431 1357.5h6M2438 1357.5h1M2444 1357.5h7M2452 1357.5h1M2454 1357.5h10M2431 1361.5h18M2450 1361.5h1M2462 1361.5h13M2441 1363.5h6M2445 1365.5h8M2435 1367.5h12M2435 1369.5h5M2431 1371.5h1M2431 1373.5h6M2438 1373.5h1M2444 1373.5h25M2431 1375.5h9M2441 1375.5h1M2453 1375.5h16M2446 1377.5h20M2435 1379.5h11M2453 1381.5h8M2439 1383.5h8M2431 1385.5h1M2431 1387.5h4M2436 1387.5h1M2442 1387.5h5M2448 1387.5h1M2450 1387.5h6M2431 1389.5h18M2450 1389.5h1M2456 1389.5h5M2462 1389.5h1M2464 1389.5h12M2431 1391.5h16M2448 1391.5h1M2460 1391.5h13M2453 1393.5h20M2441 1395.5h15M2431 1397.5h1M2430 1399.5h18" stroke="#3C3C3C" stroke-width="1" fill="none" opacity="0.85"/>
<path d="M2423 49.5h4M2427 53.5h2M2449 53.5h2M2431 61.5h4M2435 63.5h2M2451 63.5h2M2451 65.5h5M2435 75.5h4M2459 75.5h2M2462 75.5h3M2435 79.5h4M2435 81.5h3M2435 87.5h3M2444 87.5h2M2423 105.5h6M2441 113.5h5M2423 127.5h6M2423 181.5h6M2423 211.5h4M2423 215.5h5M2427 217.5h5M2423 219.5h6M2436 245.5h5M2423 263.5h6M2439 289.5h5M2447 295.5h5M2423 309.5h5M2423 311.5h5M2427 313.5h2M2447 313.5h3M2431 315.5h3M2431 317.5h5M2427 321.5h5M2423 323.5h6M2423 349.5h6M2435 357.5h5M2430 371.5h5M2423 387.5h6M2432 427.5h5M2423 455.5h4M2441 455.5h2M2427 459.5h3M2431 461.5h5M2456 461.5h3M2423 463.5h6M2423 503.5h4M2435 503.5h3M2445 507.5h5M2423 517.5h6M2423 519.5h6M2441 535.5h5M2423 557.5h2M2445 557.5h3M2423 571.5h5M2439 577.5h5M2423 585.5h6M2423 613.5h2M2427 617.5h4M2427 623.5h6M2444 623.5h2M2431 625.5h2M2423 653.5h6M2436 661.5h5M2423 681.5h3M2436 683.5h5M2423 695.5h6M2432 699.5h5M2423 705.5h4M2423 707.5h6M2441 727.5h5M2423 751.5h6M2433 775.5h5M2423 807.5h6M2423 827.5h3M2432 827.5h2M2427 829.5h4M2431 831.5h5M2452 831.5h2M2455 831.5h3M2431 839.5h6M2448 839.5h2M2423 841.5h6M2423 869.5h4M2423 885.5h6M2423 887.5h3M2427 891.5h2M2427 893.5h5M2427 895.5h4M2427 901.5h6M2444 901.5h2M2427 905.5h6M2476 929.5h3M2423 933.5h4M2465 945.5h2M2480 945.5h4M2423 951.5h6M2452 951.5h2M2427 953.5h2M2445 955.5h3M2427 957.5h5M2427 961.5h2M2431 963.5h5M2427 967.5h2M2431 969.5h2M2431 975.5h5M2458 977.5h2M2427 979.5h4M2427 983.5h4M2427 987.5h5M2431 989.5h5M2427 993.5h2M2465 1007.5h2M2480 1007.5h4M2427 1013.5h6M2423 1017.5h2M2427 1019.5h6M2423 1023.5h2M2423 1027.5h5M2423 1033.5h3M2440 1033.5h2M2427 1035.5h2M2427 1041.5h2M2448 1041.5h2M2431 1051.5h2M2469 1065.5h2M2484 1065.5h4M2427 1071.5h5M2469 1083.5h2M2484 1083.5h4M2423 1091.5h6M2476 1115.5h3M2423 1119.5h4M2465 1131.5h2M2480 1131.5h4M2423 1137.5h6M2452 1137.5h2M2427 1139.5h2M2445 1141.5h3M2427 1143.5h5M2427 1147.5h2M2431 1149.5h5M2427 1153.5h2M2431 1155.5h2M2431 1161.5h5M2458 1163.5h2M2427 1165.5h4M2427 1169.5h4M2427 1173.5h5M2431 1175.5h5M2427 1179.5h2M2465 1193.5h2M2480 1193.5h4M2427 1199.5h6M2423 1203.5h2M2427 1205.5h6M2423 1209.5h2M2423 1213.5h5M2423 1219.5h3M2440 1219.5h2M2427 1221.5h2M2427 1227.5h2M2448 1227.5h2M2431 1237.5h2M2469 1251.5h2M2484 1251.5h4M2427 1257.5h5M2469 1269.5h2M2484 1269.5h4M2423 1277.5h6M2441 1293.5h5M2423 1303.5h4M2427 1305.5h4M2446 1305.5h2M2423 1323.5h6M2423 1353.5h2M2448 1353.5h2M2427 1355.5h3M2450 1355.5h2M2452 1361.5h5M2443 1375.5h5M2450 1391.5h5M2423 1399.5h6" stroke="#C4382A" stroke-width="1" fill="none" opacity="0.85"/>
<path d="M2419 33.5h3M2423 35.5h5M2452 57.5h4M2457 65.5h4M2444 89.5h4M2459 93.5h4M2439 101.5h4M2419 109.5h3M2447 113.5h4M2437 119.5h4M2419 133.5h5M2425 133.5h3M2423 135.5h5M2440 147.5h4M2436 165.5h4M2419 185.5h3M2423 187.5h5M2419 223.5h5M2425 223.5h3M2442 245.5h4M2423 257.5h4M2436 257.5h4M2419 269.5h5M2425 269.5h3M2445 289.5h4M2453 295.5h4M2427 297.5h4M2439 303.5h4M2423 305.5h4M2439 307.5h4M2419 327.5h3M2423 329.5h5M2442 337.5h4M2439 339.5h4M2439 347.5h4M2419 353.5h3M2441 357.5h4M2436 371.5h4M2419 393.5h5M2425 393.5h3M2423 395.5h5M2438 419.5h4M2438 427.5h4M2439 449.5h4M2444 451.5h4M2423 453.5h4M2436 453.5h4M2419 467.5h3M2423 469.5h5M2438 471.5h5M2446 505.5h4M2451 507.5h4M2419 523.5h3M2423 525.5h5M2447 535.5h4M2437 545.5h4M2434 559.5h4M2445 561.5h4M2444 563.5h4M2443 569.5h4M2439 573.5h4M2445 577.5h4M2419 589.5h3M2423 591.5h5M2444 601.5h4M2439 607.5h4M2431 621.5h4M2444 621.5h4M2419 657.5h3M2423 661.5h4M2442 661.5h4M2439 669.5h4M2442 683.5h4M2438 699.5h4M2430 707.5h4M2419 711.5h5M2425 711.5h3M2423 713.5h5M2447 727.5h4M2419 755.5h3M2439 775.5h4M2436 785.5h4M2430 791.5h4M2436 793.5h4M2419 813.5h3M2432 815.5h4M2438 825.5h4M2456 837.5h4M2419 845.5h3M2448 871.5h4M2439 875.5h4M2451 877.5h4M2443 881.5h4M2439 883.5h4M2440 899.5h4M2434 905.5h4M2419 909.5h3M2423 911.5h5M2475 921.5h5M2448 935.5h4M2436 941.5h4M2485 945.5h5M2449 955.5h4M2445 959.5h5M2445 981.5h4M2445 985.5h4M2445 997.5h4M2485 1007.5h5M2449 1049.5h4M2489 1065.5h5M2449 1073.5h4M2489 1083.5h5M2419 1095.5h5M2425 1095.5h3M2423 1097.5h5M2475 1107.5h5M2448 1121.5h4M2436 1127.5h4M2485 1131.5h5M2449 1141.5h4M2445 1145.5h5M2445 1167.5h4M2445 1171.5h4M2445 1183.5h4M2485 1193.5h5M2449 1235.5h4M2489 1251.5h5M2449 1259.5h4M2489 1269.5h5M2419 1279.5h3M2423 1281.5h5M2447 1293.5h4M2452 1311.5h4M2419 1327.5h3M2423 1329.5h5M2430 1337.5h4M2440 1357.5h4M2458 1361.5h4M2440 1373.5h4M2449 1375.5h4M2438 1387.5h4M2452 1389.5h4M2456 1391.5h4M2419 1403.5h5M2425 1403.5h3M2423 1405.5h5" stroke="#2E6AA8" stroke-width="1" fill="none" opacity="0.85"/>
<path d="M2423 33.5h13M2423 109.5h18M2429 133.5h12M2423 185.5h15M2429 223.5h27M2429 269.5h28M2423 327.5h17M2423 353.5h25M2429 393.5h18M2423 467.5h21M2423 523.5h14M2423 589.5h16M2423 657.5h18M2429 711.5h19M2423 755.5h22M2423 813.5h22M2423 845.5h18M2423 909.5h16M2429 1095.5h17M2423 1279.5h17M2423 1327.5h17M2429 1403.5h15" stroke="#7A52C7" stroke-width="1" fill="none" opacity="0.85"/>
<path d="M2435 77.5h1M2437 77.5h8M2446 77.5h8M2455 77.5h3M2459 77.5h8M2468 77.5h8M2477 77.5h5M2423 163.5h1M2425 163.5h6M2432 163.5h2M2435 163.5h7M2443 163.5h6M2450 163.5h4M2455 163.5h5M2461 163.5h4M2466 163.5h7M2474 163.5h9M2484 163.5h9M2494 163.5h5M2423 341.5h1M2425 341.5h8M2434 341.5h7M2442 341.5h4M2447 341.5h6M2454 341.5h4M2459 341.5h5M2465 341.5h9M2475 341.5h3M2423 343.5h1M2425 343.5h7M2433 343.5h6M2440 343.5h6M2447 343.5h5M2453 343.5h6M2460 343.5h5M2466 343.5h5M2472 343.5h5M2423 345.5h1M2425 345.5h2M2428 345.5h2M2431 345.5h2M2434 345.5h6M2441 345.5h6M2448 345.5h8M2457 345.5h2M2423 369.5h1M2425 369.5h6M2432 369.5h2M2435 369.5h3M2439 369.5h6M2446 369.5h5M2452 369.5h3M2456 369.5h6M2463 369.5h9M2473 369.5h7M2481 369.5h6M2488 369.5h4M2423 533.5h1M2425 533.5h3M2429 533.5h6M2436 533.5h4M2441 533.5h7M2449 533.5h4M2454 533.5h3M2458 533.5h2M2461 533.5h6M2468 533.5h7M2476 533.5h5M2482 533.5h7M2490 533.5h4M2423 543.5h1M2425 543.5h8M2434 543.5h3M2438 543.5h8M2447 543.5h4M2452 543.5h7M2460 543.5h4M2423 575.5h1M2425 575.5h6M2432 575.5h7M2440 575.5h9M2450 575.5h4M2455 575.5h9M2465 575.5h5M2471 575.5h5M2477 575.5h6M2484 575.5h2M2435 627.5h1M2437 627.5h2M2440 627.5h3M2444 627.5h3M2448 627.5h4M2453 627.5h5M2459 627.5h4M2464 627.5h2M2467 627.5h6M2423 677.5h1M2425 677.5h4M2430 677.5h9M2440 677.5h5M2446 677.5h8M2455 677.5h8M2464 677.5h3M2468 677.5h2M2471 677.5h6M2478 677.5h7M2486 677.5h6M2493 677.5h2M2423 679.5h1M2425 679.5h8M2434 679.5h5M2440 679.5h6M2447 679.5h3M2451 679.5h7M2459 679.5h2M2462 679.5h4M2467 679.5h7M2427 689.5h1M2429 689.5h4M2434 689.5h4M2439 689.5h2M2442 689.5h5M2448 689.5h6M2455 689.5h8M2464 689.5h8M2427 691.5h1M2429 691.5h6M2436 691.5h7M2444 691.5h9M2454 691.5h8M2463 691.5h4M2468 691.5h5M2435 833.5h1M2437 833.5h7M2445 833.5h8M2454 833.5h2M2457 833.5h5M2463 833.5h6M2470 833.5h6M2477 833.5h5M2483 833.5h6M2490 833.5h5M2496 833.5h9M2427 879.5h1M2429 879.5h9M2439 879.5h6M2446 879.5h2M2449 879.5h2M2452 879.5h7M2460 879.5h4M2465 879.5h9M2475 879.5h7M2483 879.5h6M2490 879.5h7M2498 879.5h5M2427 889.5h1M2429 889.5h3M2433 889.5h9M2443 889.5h2M2446 889.5h3M2450 889.5h4M2455 889.5h7M2463 889.5h4M2427 939.5h1M2429 939.5h4M2434 939.5h3M2438 939.5h3M2442 939.5h2M2445 939.5h3M2449 939.5h4M2454 939.5h2M2457 939.5h3M2423 1015.5h1M2425 1015.5h2M2428 1015.5h3M2432 1015.5h4M2437 1015.5h6M2444 1015.5h2M2447 1015.5h3M2451 1015.5h9M2461 1015.5h5M2467 1015.5h4M2472 1015.5h2M2475 1015.5h3M2479 1015.5h3M2483 1015.5h7M2427 1039.5h1M2429 1039.5h9M2439 1039.5h2M2442 1039.5h6M2449 1039.5h3M2453 1039.5h4M2431 1055.5h1M2433 1055.5h2M2436 1055.5h4M2441 1055.5h4M2446 1055.5h3M2450 1055.5h4M2455 1055.5h2M2458 1055.5h3M2462 1055.5h4M2467 1055.5h5M2473 1055.5h2M2476 1055.5h3M2480 1055.5h2M2483 1055.5h11M2427 1125.5h1M2429 1125.5h4M2434 1125.5h3M2438 1125.5h3M2442 1125.5h2M2445 1125.5h3M2449 1125.5h4M2454 1125.5h2M2457 1125.5h3M2423 1201.5h1M2425 1201.5h2M2428 1201.5h3M2432 1201.5h4M2437 1201.5h6M2444 1201.5h2M2447 1201.5h3M2451 1201.5h9M2461 1201.5h5M2467 1201.5h4M2472 1201.5h2M2475 1201.5h3M2479 1201.5h3M2483 1201.5h7M2427 1225.5h1M2429 1225.5h9M2439 1225.5h2M2442 1225.5h6M2449 1225.5h3M2453 1225.5h4M2431 1241.5h1M2433 1241.5h2M2436 1241.5h4M2441 1241.5h4M2446 1241.5h3M2450 1241.5h4M2455 1241.5h2M2458 1241.5h3M2462 1241.5h4M2467 1241.5h5M2473 1241.5h2M2476 1241.5h3M2480 1241.5h2M2483 1241.5h11M2423 1349.5h1M2425 1349.5h6M2432 1349.5h7M2440 1349.5h5M2446 1349.5h5M2452 1349.5h8M2461 1349.5h9M2471 1349.5h2M2474 1349.5h5" stroke="#7A7A7A" stroke-width="1" fill="none" opacity="0.85"/>
<path d="M2449 977.5h8M2467 1053.5h2M2449 1163.5h8M2467 1239.5h2" stroke="#3A78B8" stroke-width="1" fill="none" opacity="0.85"/>
<path d="M2423 37.5h14M2423 39.5h22M2423 41.5h7M2423 43.5h14M2423 45.5h10M2439 67.5h11M2439 71.5h6M2427 115.5h15M2427 121.5h16M2423 137.5h12M2423 139.5h16M2423 141.5h16M2427 151.5h6M2427 153.5h15M2427 167.5h6M2427 169.5h4M2427 175.5h6M2423 189.5h12M2427 207.5h6M2427 247.5h13M2427 253.5h9M2423 331.5h12M2423 333.5h14M2427 359.5h6M2427 361.5h13M2427 363.5h16M2427 373.5h12M2427 375.5h21M2427 377.5h18M2427 379.5h4M2423 397.5h11M2423 399.5h10M2423 401.5h8M2423 403.5h8M2423 405.5h12M2427 429.5h18M2427 441.5h13M2427 443.5h13M2423 471.5h14M2423 473.5h17M2423 475.5h14M2423 477.5h12M2427 495.5h12M2427 499.5h16M2431 511.5h6M2423 527.5h14M2427 537.5h6M2427 539.5h11M2427 549.5h14M2427 551.5h10M2423 593.5h12M2423 595.5h14M2439 633.5h21M2439 635.5h16M2439 637.5h18M2439 643.5h6M2439 647.5h11M2439 649.5h18M2427 665.5h4M2427 671.5h14M2431 685.5h10M2427 701.5h9M2423 715.5h17M2423 717.5h12M2423 719.5h10M2423 721.5h11M2423 723.5h11M2427 731.5h10M2427 733.5h10M2427 735.5h13M2427 743.5h4M2427 747.5h7M2427 795.5h6M2427 797.5h6M2427 801.5h6M2427 817.5h9M2427 821.5h9M2423 913.5h17M2423 915.5h14M2423 917.5h7M2423 919.5h19M2423 921.5h12M2431 945.5h9M2431 1003.5h7M2431 1005.5h5M2431 1007.5h9M2435 1061.5h7M2435 1063.5h5M2435 1065.5h9M2435 1079.5h7M2435 1081.5h5M2435 1083.5h9M2423 1099.5h17M2423 1101.5h14M2423 1103.5h7M2423 1105.5h19M2423 1107.5h12M2431 1131.5h9M2431 1189.5h7M2431 1191.5h5M2431 1193.5h9M2435 1247.5h7M2435 1249.5h5M2435 1251.5h9M2435 1265.5h7M2435 1267.5h5M2435 1269.5h9M2423 1283.5h19M2423 1285.5h7M2427 1297.5h12M2427 1299.5h16M2423 1331.5h17M2427 1339.5h7M2427 1341.5h13M2427 1343.5h6M2435 1363.5h6M2435 1365.5h10M2435 1377.5h11M2435 1381.5h18M2435 1383.5h4M2435 1393.5h18M2435 1395.5h6" stroke="#3F4FB5" stroke-width="1" fill="none" opacity="0.85"/>
<rect x="2415" y="971.3" width="111" height="1.4" fill="#5B87BA" opacity="0.9"/>
<rect x="2435" y="971" width="11" height="2" fill="#0F4A85"/>
<rect x="2415" y="977.3" width="111" height="1.4" fill="#5B87BA" opacity="0.9"/>
<rect x="2435" y="977" width="11" height="2" fill="#0F4A85"/>
<rect x="2415" y="981.3" width="111" height="1.4" fill="#5B87BA" opacity="0.9"/>
<rect x="2431" y="981" width="11" height="2" fill="#0F4A85"/>
<rect x="2415" y="985.3" width="111" height="1.4" fill="#5B87BA" opacity="0.9"/>
<rect x="2431" y="985" width="11" height="2" fill="#0F4A85"/>
<rect x="2415" y="991.3" width="111" height="1.4" fill="#5B87BA" opacity="0.9"/>
<rect x="2462" y="991" width="11" height="2" fill="#0F4A85"/>
<rect x="2415" y="999.3" width="111" height="1.4" fill="#5B87BA" opacity="0.9"/>
<rect x="2427" y="999" width="11" height="2" fill="#0F4A85"/>
<rect x="2415" y="1013.3" width="111" height="1.4" fill="#5B87BA" opacity="0.9"/>
<rect x="2444" y="1013" width="11" height="2" fill="#0F4A85"/>
<rect x="2415" y="1057.3" width="111" height="1.4" fill="#5B87BA" opacity="0.9"/>
<rect x="2431" y="1057" width="11" height="2" fill="#0F4A85"/>
<rect x="2415" y="1075.3" width="111" height="1.4" fill="#5B87BA" opacity="0.9"/>
<rect x="2431" y="1075" width="11" height="2" fill="#0F4A85"/>
<rect x="2456" y="1089" width="11" height="2" fill="#0F4A85"/>
<rect x="2526" y="32" width="1" height="1376" fill="#A9A9A9"/>
<rect x="2527" y="1040" width="20" height="38" fill="#EEF1F5"/>
<rect x="2534" y="1008.5" width="9.5" height="22.5" fill="#C7AACB"/>
<rect x="2534" y="1031" width="9.5" height="2" fill="#B9A7BF"/>
<rect x="2534" y="1033" width="9.5" height="10" fill="#B4B4B4"/>
<rect x="2534" y="1059" width="9.5" height="19.5" fill="#C7AACB"/>
<rect x="2527" y="1078" width="20" height="9.5" fill="#F1F1A0"/>
<rect x="2527" y="1081.5" width="20" height="3" fill="#3D6A8F"/>
</svg>
<div class="abs" style="left:629px;top:0;width:1919px;height:32px;background:#F6FAFE;border-bottom:1px solid #0F4A85"></div>
<div class="t" style="left:655.50px;top:0.00px;font-size:22px;line-height:29px;color:#4A4A4A;transform:scaleX(1.0521);transform-origin:0 50%;">home</div>
<div class="t" style="left:743.50px;top:0.00px;font-size:22px;line-height:29px;color:#4A4A4A;transform:scaleX(1.0202);transform-origin:0 50%;">huangj</div>
<div class="t" style="left:840.00px;top:0.00px;font-size:22px;line-height:29px;color:#4A4A4A;transform:scaleX(0.9642);transform-origin:0 50%;">01_LangChain</div>
<div class="t" style="left:1007.00px;top:0.00px;font-size:22px;line-height:29px;color:#4A4A4A;transform:scaleX(0.9972);transform-origin:0 50%;">langchain_env</div>
<div class="t" style="left:1177.00px;top:0.00px;font-size:22px;line-height:29px;color:#4A4A4A;transform:scaleX(1.0449);transform-origin:0 50%;">lib</div>
<div class="t" style="left:1229.50px;top:0.00px;font-size:22px;line-height:29px;color:#4A4A4A;transform:scaleX(1.0224);transform-origin:0 50%;">python3.8</div>
<div class="t" style="left:1357.50px;top:0.00px;font-size:22px;line-height:29px;color:#4A4A4A;transform:scaleX(1.0130);transform-origin:0 50%;">site-packages</div>
<div class="t" style="left:1522.70px;top:0.00px;font-size:22px;line-height:29px;color:#4A4A4A;transform:scaleX(1.0161);transform-origin:0 50%;">langchain</div>
<div class="t" style="left:1647.80px;top:0.00px;font-size:22px;line-height:29px;color:#4A4A4A;transform:scaleX(1.0022);transform-origin:0 50%;">agents</div>
<div class="t" style="left:1781.00px;top:0.00px;font-size:22px;line-height:29px;color:#4A4A4A;transform:scaleX(1.0260);transform-origin:0 50%;">agent.py</div>
<div class="t" style="left:1929.70px;top:0.00px;font-size:22px;line-height:29px;color:#4A4A4A;transform:scaleX(1.0110);transform-origin:0 50%;">AgentExecutor</div>
<div class="t" style="left:2137.00px;top:0.00px;font-size:22px;line-height:29px;color:#4A4A4A;transform:scaleX(0.9631);transform-origin:0 50%;">_take_next_step</div>
<svg class="abs" style="left:721.5px;top:5.5px" width="16" height="20" viewBox="0 0 16 20"><path d="M4.500 3 L11.300 10 L4.500 17" fill="none" stroke="#555555" stroke-width="1.500"/></svg>
<svg class="abs" style="left:817.0px;top:5.5px" width="16" height="20" viewBox="0 0 16 20"><path d="M4.500 3 L11.300 10 L4.500 17" fill="none" stroke="#555555" stroke-width="1.500"/></svg>
<svg class="abs" style="left:985.8px;top:5.5px" width="16" height="20" viewBox="0 0 16 20"><path d="M4.500 3 L11.300 10 L4.500 17" fill="none" stroke="#555555" stroke-width="1.500"/></svg>
<svg class="abs" style="left:1156.0px;top:5.5px" width="16" height="20" viewBox="0 0 16 20"><path d="M4.500 3 L11.300 10 L4.500 17" fill="none" stroke="#555555" stroke-width="1.500"/></svg>
<svg class="abs" style="left:1208.6px;top:5.5px" width="16" height="20" viewBox="0 0 16 20"><path d="M4.500 3 L11.300 10 L4.500 17" fill="none" stroke="#555555" stroke-width="1.500"/></svg>
<svg class="abs" style="left:1335.5px;top:5.5px" width="16" height="20" viewBox="0 0 16 20"><path d="M4.500 3 L11.300 10 L4.500 17" fill="none" stroke="#555555" stroke-width="1.500"/></svg>
<svg class="abs" style="left:1501.5px;top:5.5px" width="16" height="20" viewBox="0 0 16 20"><path d="M4.500 3 L11.300 10 L4.500 17" fill="none" stroke="#555555" stroke-width="1.500"/></svg>
<svg class="abs" style="left:1627.0px;top:5.5px" width="16" height="20" viewBox="0 0 16 20"><path d="M4.500 3 L11.300 10 L4.500 17" fill="none" stroke="#555555" stroke-width="1.500"/></svg>
<svg class="abs" style="left:1721.7px;top:5.5px" width="16" height="20" viewBox="0 0 16 20"><path d="M4.500 3 L11.300 10 L4.500 17" fill="none" stroke="#555555" stroke-width="1.500"/></svg>
<svg class="abs" style="left:1874.8px;top:5.5px" width="16" height="20" viewBox="0 0 16 20"><path d="M4.500 3 L11.300 10 L4.500 17" fill="none" stroke="#555555" stroke-width="1.500"/></svg>
<svg class="abs" style="left:2081.8px;top:5.5px" width="16" height="20" viewBox="0 0 16 20"><path d="M4.500 3 L11.300 10 L4.500 17" fill="none" stroke="#555555" stroke-width="1.500"/></svg>
<svg class="abs" style="left:1747.7px;top:2.700px" width="24" height="24" viewBox="0 0 26 26"><path d="M12.800 2.500c-4.200 0-4 1.800-4 1.800v3h4.200v1H6.300S3 8 3 12.600s2.900 4.400 2.900 4.400h1.900v-2.600s-.1-2.900 2.800-2.900h4.600s2.700 0 2.700-2.600V5.100S18.300 2.500 12.800 2.500z" fill="#4584B6"/><path d="M13.200 23.500c4.200 0 4-1.800 4-1.800v-3h-4.200v-1h6.700S23 18 23 13.400s-2.900-4.400-2.900-4.400h-1.900v2.600s.1 2.900-2.800 2.900h-4.600s-2.700 0-2.700 2.600v3.800S7.700 23.500 13.200 23.500z" fill="#5A9FD4"/><circle cx="10.600" cy="5" r="0.900" fill="#fff"/><circle cx="15.400" cy="21" r="0.900" fill="#fff"/></svg>
<svg class="abs" style="left:1890px;top:0px" width="40" height="30" viewBox="1890 0 40 30" fill="none" stroke="#D67E00" stroke-width="1.700" stroke-linejoin="round"><path d="M1898 9.500 L1905.600 1.900 L1910 6.300 L1902.400 14.200 Z"/><path d="M1906.200 12 V20.600 H1913.600"/><path d="M1906.200 13.400 H1915.400"/><path d="M1915.100 13.700 L1918.900 10.400 L1921.400 12.900 L1917.600 16.700 Z"/><path d="M1913.200 21.300 L1917 18 L1920.800 20.900 L1917 24.700 Z"/></svg>
<svg class="abs" style="left:2103px;top:-1px" width="30" height="30" viewBox="0 0 30 30" fill="none" stroke="#652D90" stroke-width="1.700" stroke-linejoin="round"><path d="M15 3 L25.200 8.500 V20.500 L15 26.500 L4.800 20.500 V8.500 Z"/><path d="M4.800 8.500 L15 14 L25.200 8.500"/><path d="M15 14 V26.500"/></svg>
<div class="abs" style="left:628px;top:0;width:1px;height:1916px;background:#0F4A85"></div>
<div class="abs" style="left:2547px;top:0;width:1px;height:1916px;background:#4F79AB"></div>
<div class="abs" style="left:79px;top:0;width:549px;height:1916px;background:#F6FAFE"></div>
<svg class="abs" style="left:85.5px;top:6.6px" width="22" height="16" viewBox="0 0 22 16"><path d="M2.5 3.500 L11 12 L19.500 3.500" fill="none" stroke="#292929" stroke-width="1.8"/></svg>
<div class="t" style="left:114.00px;top:3.30px;font-size:19.25px;line-height:25px;font-weight:bold;color:#292929;transform:scaleX(0.9125);transform-origin:0 50%;">VARIABLES</div>
<svg class="abs" style="left:101.3px;top:45.5px" width="22" height="16" viewBox="0 0 22 16"><path d="M2.5 3.500 L11 12 L19.500 3.500" fill="none" stroke="#292929" stroke-width="1.8"/></svg>
<div class="t" style="left:132.30px;top:40.70px;font-size:19.25px;line-height:25px;font-weight:bold;color:#292929;transform:scaleX(0.8904);transform-origin:0 50%;">Locals</div>
<div class="abs" style="left:79px;top:534.5px;width:548px;height:37.5px;background:#E1E8F1;box-sizing:border-box;border:1px dotted #006BBD"></div>
<div class="abs" style="left:106.8px;top:72.5px;width:1.8px;height:571.5px;background:#C9CBD1"></div>
<div class="abs" style="left:609px;top:54px;width:18px;height:487.5px;background:#9DB3CE"></div>
<div class="abs" style="left:79px;top:0;width:549px;height:644px;overflow:hidden">
<div class="vr m" style="left:66px;top:72.0px">(return) Tool.run: <span class="s">"The average price…</span></div>
<div class="vr m" style="left:66px;top:110.5px">(return) ZeroShotAgent.plan: AgentAct…</div>
<div class="vr m" style="left:66px;top:149.0px">actions: [AgentAction(tool='Se...f ro…</div>
<div class="vr m" style="left:66px;top:187.5px">agent_action: AgentAction(tool='Searc…</div>
<div class="vr m" style="left:66px;top:226.0px">color: <span class="s">'blue'</span></div>
<div class="vr m" style="left:66px;top:264.5px">color_mapping: {'Search': 'blue', 'Ca…</div>
<div class="vr m" style="left:66px;top:303.0px">inputs: {'input': '<span style="font-size:22.75px">目前市场上玫瑰花的平</span>…</div>
<div class="vr m" style="left:66px;top:341.5px">intermediate_steps: []</div>
<div class="vr m" style="left:66px;top:380.0px">name_to_tool_map: {'Search': Tool(nam…</div>
<div class="vr m" style="left:66px;top:418.5px">observation: <span class="s">"The average price for a…</span></div>
<div class="vr m" style="left:66px;top:457.0px">output: AgentAction(tool='Search', to…</div>
<div class="vr m" style="left:66px;top:495.5px">result: []</div>
<div class="vr m" style="left:66px;top:534.0px">return_direct: <span class="bl">False</span></div>
<div class="vr m" style="left:66px;top:572.5px">run_manager: &lt;langchain.callbacks.man…</div>
<div class="vr m" style="left:66px;top:611.0px">self: AgentExecutor(memory=None, call…</div>
</div>
<svg class="abs" style="left:119.0px;top:119.2px" width="16" height="22" viewBox="0 0 16 22"><path d="M3.500 2.500 L12 11 L3.500 19.500" fill="none" stroke="#292929" stroke-width="1.8"/></svg>
<svg class="abs" style="left:119.0px;top:157.8px" width="16" height="22" viewBox="0 0 16 22"><path d="M3.500 2.500 L12 11 L3.500 19.500" fill="none" stroke="#292929" stroke-width="1.8"/></svg>
<svg class="abs" style="left:119.0px;top:196.2px" width="16" height="22" viewBox="0 0 16 22"><path d="M3.500 2.500 L12 11 L3.500 19.500" fill="none" stroke="#292929" stroke-width="1.8"/></svg>
<svg class="abs" style="left:119.0px;top:273.2px" width="16" height="22" viewBox="0 0 16 22"><path d="M3.500 2.500 L12 11 L3.500 19.500" fill="none" stroke="#292929" stroke-width="1.8"/></svg>
<svg class="abs" style="left:119.0px;top:311.8px" width="16" height="22" viewBox="0 0 16 22"><path d="M3.500 2.500 L12 11 L3.500 19.500" fill="none" stroke="#292929" stroke-width="1.8"/></svg>
<svg class="abs" style="left:119.0px;top:350.2px" width="16" height="22" viewBox="0 0 16 22"><path d="M3.500 2.500 L12 11 L3.500 19.500" fill="none" stroke="#292929" stroke-width="1.8"/></svg>
<svg class="abs" style="left:119.0px;top:388.8px" width="16" height="22" viewBox="0 0 16 22"><path d="M3.500 2.500 L12 11 L3.500 19.500" fill="none" stroke="#292929" stroke-width="1.8"/></svg>
<svg class="abs" style="left:119.0px;top:465.8px" width="16" height="22" viewBox="0 0 16 22"><path d="M3.500 2.500 L12 11 L3.500 19.500" fill="none" stroke="#292929" stroke-width="1.8"/></svg>
<svg class="abs" style="left:119.0px;top:504.2px" width="16" height="22" viewBox="0 0 16 22"><path d="M3.500 2.500 L12 11 L3.500 19.500" fill="none" stroke="#292929" stroke-width="1.8"/></svg>
<svg class="abs" style="left:119.0px;top:581.2px" width="16" height="22" viewBox="0 0 16 22"><path d="M3.500 2.500 L12 11 L3.500 19.500" fill="none" stroke="#292929" stroke-width="1.8"/></svg>
<svg class="abs" style="left:119.0px;top:619.8px" width="16" height="22" viewBox="0 0 16 22"><path d="M3.500 2.500 L12 11 L3.500 19.500" fill="none" stroke="#292929" stroke-width="1.8"/></svg>
<div class="abs" style="left:79px;top:644px;width:549px;height:1px;background:#0F4A85"></div>
<svg class="abs" style="left:89.0px;top:654.0px" width="16" height="22" viewBox="0 0 16 22"><path d="M3.500 2.500 L12 11 L3.500 19.500" fill="none" stroke="#292929" stroke-width="1.8"/></svg>
<div class="t" style="left:114.00px;top:652.50px;font-size:19.25px;line-height:25px;font-weight:bold;color:#292929;transform:scaleX(0.9762);transform-origin:0 50%;">WATCH</div>
<div class="abs" style="left:79px;top:683px;width:549px;height:1px;background:#0F4A85"></div>
<svg class="abs" style="left:85.5px;top:696.0px" width="22" height="16" viewBox="0 0 22 16"><path d="M2.5 3.500 L11 12 L19.500 3.500" fill="none" stroke="#292929" stroke-width="1.8"/></svg>
<div class="t" style="left:114.00px;top:691.20px;font-size:19.25px;line-height:25px;font-weight:bold;color:#292929;transform:scaleX(0.8994);transform-origin:0 50%;">CALL STACK</div>
<div class="t" style="left:495.00px;top:693.20px;font-size:17.5px;line-height:23px;font-weight:bold;color:#292929;transform:scaleX(0.8505);transform-origin:0 50%;">Paused on step</div>
<div class="vr m" style="left:132.3px;top:721.0px;font-style:italic;color:#1f1f1f">_take_next_step</div>
<div class="t" style="left:444.00px;top:727.25px;font-size:22px;line-height:29px;font-style:italic;color:#5A5A5A;transform:scaleX(0.9834);transform-origin:0 50%;">agent.py</div>
<div class="abs" style="left:545px;top:725.2px;width:64px;height:32.5px;border-radius:16.5px;background:#0F4A85"></div>
<div class="t" style="left:554.50px;top:729.25px;font-size:19.25px;line-height:25px;font-style:italic;color:#FFFFFF;transform:scaleX(0.9341);transform-origin:0 50%;">906:1</div>
<div class="vr m" style="left:132.3px;top:759.5px;font-style:italic;color:#1f1f1f">_call</div>
<div class="t" style="left:433.50px;top:765.75px;font-size:22px;line-height:29px;font-style:italic;color:#5A5A5A;transform:scaleX(0.9869);transform-origin:0 50%;">agent.py</div>
<div class="abs" style="left:534.8px;top:763.8px;width:74.20000000000005px;height:32.5px;border-radius:16.5px;background:#0F4A85"></div>
<div class="t" style="left:544.30px;top:767.75px;font-size:19.25px;line-height:25px;font-style:italic;color:#FFFFFF;transform:scaleX(0.9375);transform-origin:0 50%;">1029:1</div>
<div class="vr m" style="left:132.3px;top:798.0px;font-style:italic;color:#1f1f1f">__call__</div>
<div class="t" style="left:454.70px;top:804.25px;font-size:22px;line-height:29px;font-style:italic;color:#5A5A5A;transform:scaleX(0.9383);transform-origin:0 50%;">base.py</div>
<div class="abs" style="left:545px;top:802.2px;width:64px;height:32.5px;border-radius:16.5px;background:#0F4A85"></div>
<div class="t" style="left:554.50px;top:806.25px;font-size:19.25px;line-height:25px;font-style:italic;color:#FFFFFF;transform:scaleX(0.9341);transform-origin:0 50%;">252:1</div>
<div class="vr m" style="left:132.3px;top:836.5px;font-style:italic;color:#1f1f1f">run</div>
<div class="t" style="left:454.70px;top:842.75px;font-size:22px;line-height:29px;font-style:italic;color:#5A5A5A;transform:scaleX(0.9383);transform-origin:0 50%;">base.py</div>
<div class="abs" style="left:545px;top:840.8px;width:64px;height:32.5px;border-radius:16.5px;background:#0F4A85"></div>
<div class="t" style="left:554.50px;top:844.75px;font-size:19.25px;line-height:25px;font-style:italic;color:#FFFFFF;transform:scaleX(0.9341);transform-origin:0 50%;">451:1</div>
<div class="vr m" style="left:132.3px;top:875.0px;color:#1f1f1f">&lt;module&gt;</div>
<div class="t" style="left:312.70px;top:881.25px;font-size:22px;line-height:29px;color:#5A5A5A;transform:scaleX(0.9652);transform-origin:0 50%;">07_02_Agent_ReAct.py</div>
<div class="abs" style="left:556px;top:879.2px;width:53px;height:32.5px;border-radius:16.5px;background:#0F4A85"></div>
<div class="t" style="left:565.50px;top:883.25px;font-size:19.25px;line-height:25px;color:#FFFFFF;transform:scaleX(0.9075);transform-origin:0 50%;">19:1</div>
<div class="vr m" style="left:132.3px;top:913.5px;font-style:italic;color:#1f1f1f">_run_code</div>
<div class="t" style="left:454.70px;top:919.75px;font-size:22px;line-height:29px;font-style:italic;color:#5A5A5A;transform:scaleX(0.9946);transform-origin:0 50%;">runpy.py</div>
<div class="abs" style="left:556px;top:917.8px;width:53px;height:32.5px;border-radius:16.5px;background:#0F4A85"></div>
<div class="t" style="left:565.50px;top:921.75px;font-size:19.25px;line-height:25px;font-style:italic;color:#FFFFFF;transform:scaleX(0.9075);transform-origin:0 50%;">87:1</div>
<div class="vr m" style="left:132.3px;top:952.0px;font-style:italic;color:#1f1f1f">_run_module_as_main</div>
<div class="t" style="left:444.00px;top:958.25px;font-size:22px;line-height:29px;font-style:italic;color:#5A5A5A;transform:scaleX(1.0031);transform-origin:0 50%;">runpy.py</div>
<div class="abs" style="left:545px;top:956.2px;width:64px;height:32.5px;border-radius:16.5px;background:#0F4A85"></div>
<div class="t" style="left:554.50px;top:960.25px;font-size:19.25px;line-height:25px;font-style:italic;color:#FFFFFF;transform:scaleX(0.9341);transform-origin:0 50%;">194:1</div>
<div class="abs" style="left:79px;top:1535px;width:549px;height:1px;background:#0F4A85"></div>
<svg class="abs" style="left:85.5px;top:1548.5px" width="22" height="16" viewBox="0 0 22 16"><path d="M2.5 3.500 L11 12 L19.500 3.500" fill="none" stroke="#292929" stroke-width="1.8"/></svg>
<div class="t" style="left:114.00px;top:1543.80px;font-size:19.25px;line-height:25px;font-weight:bold;color:#292929;transform:scaleX(0.9350);transform-origin:0 50%;">BREAKPOINTS</div>
<svg class="abs" style="left:122.8px;top:1580.75px" width="23" height="23" viewBox="0 0 23 23"><rect x="0.9" y="0.9" width="21.2" height="21.2" rx="3.500" fill="#fff" stroke="#767676" stroke-width="1.800"/></svg>
<div class="t" style="left:151.60px;top:1578.75px;font-size:22px;line-height:29px;color:#292929;transform:scaleX(0.9736);transform-origin:0 50%;">Raised Exceptions</div>
<svg class="abs" style="left:122.8px;top:1619.25px;" width="23" height="23" viewBox="0 0 23 23"><rect x="0" y="0" width="23" height="23" rx="3.500" fill="#0075FF"/><path d="M5 11.800 L9.500 16.300 L18 6.800" fill="none" stroke="#fff" stroke-width="3"/></svg>
<div class="t" style="left:151.60px;top:1617.25px;font-size:22px;line-height:29px;color:#292929;transform:scaleX(1.0062);transform-origin:0 50%;">Uncaught Exceptions</div>
<svg class="abs" style="left:122.8px;top:1657.75px" width="23" height="23" viewBox="0 0 23 23"><rect x="0.9" y="0.9" width="21.2" height="21.2" rx="3.500" fill="#fff" stroke="#767676" stroke-width="1.800"/></svg>
<div class="t" style="left:151.60px;top:1655.75px;font-size:22px;line-height:29px;color:#292929;transform:scaleX(1.0009);transform-origin:0 50%;">User Uncaught Exceptions</div>
<svg class="abs" style="left:122.8px;top:1696.25px;" width="23" height="23" viewBox="0 0 23 23"><rect x="0" y="0" width="23" height="23" rx="3.500" fill="#0075FF"/><path d="M5 11.800 L9.500 16.300 L18 6.800" fill="none" stroke="#fff" stroke-width="3"/></svg>
<div class="t" style="left:151.60px;top:1694.25px;font-size:22px;line-height:29px;color:#292929;transform:scaleX(0.9605);transform-origin:0 50%;">05_03_Router_Chain.py</div>
<div class="abs" style="left:91.7px;top:1700.5px;width:14.6px;height:14.6px;border-radius:50%;background:#E51400"></div>
<div class="abs" style="left:569.5px;top:1692.8px;width:39.5px;height:33px;border-radius:16.5px;background:#0F4A85"></div>
<div class="t" style="left:0.00px;top:1697.25px;font-size:19.25px;line-height:25px;color:#FFFFFF;left:569.5px;width:39.5px;text-align:center;">62</div>
<svg class="abs" style="left:122.8px;top:1734.75px;" width="23" height="23" viewBox="0 0 23 23"><rect x="0" y="0" width="23" height="23" rx="3.500" fill="#0075FF"/><path d="M5 11.800 L9.500 16.300 L18 6.800" fill="none" stroke="#fff" stroke-width="3"/></svg>
<div class="t" style="left:151.60px;top:1732.75px;font-size:22px;line-height:29px;color:#292929;transform:scaleX(0.9639);transform-origin:0 50%;">07_02_Agent_ReAct.py</div>
<div class="abs" style="left:91.7px;top:1739.0px;width:14.6px;height:14.6px;border-radius:50%;background:#E51400"></div>
<div class="abs" style="left:569.5px;top:1731.2px;width:39.5px;height:33px;border-radius:16.5px;background:#0F4A85"></div>
<div class="t" style="left:0.00px;top:1735.75px;font-size:19.25px;line-height:25px;color:#FFFFFF;left:569.5px;width:39.5px;text-align:center;">19</div>
<svg class="abs" style="left:122.8px;top:1773.25px;opacity:0.5;" width="23" height="23" viewBox="0 0 23 23"><rect x="0" y="0" width="23" height="23" rx="3.500" fill="#0075FF"/><path d="M5 11.800 L9.500 16.300 L18 6.800" fill="none" stroke="#fff" stroke-width="3"/></svg>
<div class="t" style="left:151.60px;top:1771.25px;font-size:22px;line-height:29px;color:#8A8A8A;transform:scaleX(0.9580);transform-origin:0 50%;">08_Doc_QA_A*Star.py</div>
<div class="abs" style="left:91.7px;top:1777.5px;width:14.6px;height:14.6px;border-radius:50%;box-sizing:border-box;border:2.6px solid #A0A0A0"></div>
<div class="abs" style="left:569.5px;top:1769.8px;width:39.5px;height:33px;border-radius:16.5px;background:#6E8FB6"></div>
<div class="t" style="left:0.00px;top:1774.25px;font-size:19.25px;line-height:25px;color:#FFFFFF;left:569.5px;width:39.5px;text-align:center;">29</div>
<svg class="abs" style="left:122.8px;top:1811.75px;" width="23" height="23" viewBox="0 0 23 23"><rect x="0" y="0" width="23" height="23" rx="3.500" fill="#0075FF"/><path d="M5 11.800 L9.500 16.300 L18 6.800" fill="none" stroke="#fff" stroke-width="3"/></svg>
<div class="t" style="left:151.60px;top:1809.75px;font-size:22px;line-height:29px;color:#292929;transform:scaleX(0.9687);transform-origin:0 50%;">08_Tool_01_CustTool.py</div>
<div class="abs" style="left:91.7px;top:1816.0px;width:14.6px;height:14.6px;border-radius:50%;background:#E51400"></div>
<div class="abs" style="left:569.5px;top:1808.2px;width:39.5px;height:33px;border-radius:16.5px;background:#0F4A85"></div>
<div class="t" style="left:0.00px;top:1812.75px;font-size:19.25px;line-height:25px;color:#FFFFFF;left:569.5px;width:39.5px;text-align:center;">31</div>
<svg class="abs" style="left:122.8px;top:1850.25px;" width="23" height="23" viewBox="0 0 23 23"><rect x="0" y="0" width="23" height="23" rx="3.500" fill="#0075FF"/><path d="M5 11.800 L9.500 16.300 L18 6.800" fill="none" stroke="#fff" stroke-width="3"/></svg>
<div class="t" style="left:151.60px;top:1848.25px;font-size:22px;line-height:29px;color:#292929;transform:scaleX(0.9562);transform-origin:0 50%;">08_Tool_02_BaseTool.py</div>
<div class="abs" style="left:91.7px;top:1854.5px;width:14.6px;height:14.6px;border-radius:50%;background:#E51400"></div>
<div class="abs" style="left:569.5px;top:1846.8px;width:39.5px;height:33px;border-radius:16.5px;background:#0F4A85"></div>
<div class="t" style="left:0.00px;top:1851.25px;font-size:19.25px;line-height:25px;color:#FFFFFF;left:569.5px;width:39.5px;text-align:center;">78</div>
<svg class="abs" style="left:122.8px;top:1888.75px;" width="23" height="23" viewBox="0 0 23 23"><rect x="0" y="0" width="23" height="23" rx="3.500" fill="#0075FF"/><path d="M5 11.800 L9.500 16.300 L18 6.800" fill="none" stroke="#fff" stroke-width="3"/></svg>
<div class="t" style="left:151.60px;top:1886.75px;font-size:22px;line-height:29px;color:#292929;transform:scaleX(0.9562);transform-origin:0 50%;">08_Tool_02_BaseTool.py</div>
<div class="abs" style="left:91.7px;top:1893.0px;width:14.6px;height:14.6px;border-radius:50%;background:#E51400"></div>
<div class="abs" style="left:569.5px;top:1885.2px;width:39.5px;height:33px;border-radius:16.5px;background:#0F4A85"></div>
<div class="t" style="left:0.00px;top:1889.75px;font-size:19.25px;line-height:25px;color:#FFFFFF;left:569.5px;width:39.5px;text-align:center;">82</div>
<div class="abs" style="left:349px;top:-2px;width:315.5px;height:55.5px;box-sizing:border-box;border:1px solid #0F4A85;border-radius:0 0 8px 8px;background:#F6FAFE"></div>
<svg class="abs" style="left:0;top:0" width="700" height="56" viewBox="0 0 700 56" fill="none" stroke="#0B78D0" stroke-width="2.700" stroke-linejoin="miter"><rect x="371.5" y="16.1" width="3.9" height="3.9" fill="#8E8E8E" stroke="none"/><rect x="371.5" y="23.0" width="3.9" height="3.9" fill="#8E8E8E" stroke="none"/><rect x="371.5" y="30.0" width="3.9" height="3.9" fill="#8E8E8E" stroke="none"/><rect x="378.4" y="16.1" width="3.9" height="3.9" fill="#8E8E8E" stroke="none"/><rect x="378.4" y="23.0" width="3.9" height="3.9" fill="#8E8E8E" stroke="none"/><rect x="378.4" y="30.0" width="3.9" height="3.9" fill="#8E8E8E" stroke="none"/><path d="M401.700 14.600 V35"/><path d="M409 16.800 L420.300 24.800 L409 32.800 Z"/><path d="M446 25 A10 10 0 0 1 464.800 21.500"/><path d="M465.700 14.600 V22.700 H458.200"/><circle cx="455.600" cy="32.300" r="3.400" fill="#0B78D0" stroke="none"/><path d="M501 13.500 V27.300"/><path d="M493.700 20 L501 27.600 L508.300 20" stroke-linejoin="round"/><circle cx="501" cy="33.500" r="3.400" fill="#0B78D0" stroke="none"/><path d="M546.500 30 V15"/><path d="M539.300 21.700 L546.500 14.300 L553.700 21.700"/><circle cx="546.500" cy="33.500" r="3.400" fill="#0B78D0" stroke="none"/><path d="M586 18.300 A9 9 0 1 1 583.400 26.500" stroke="#388A34"/><path d="M583.200 15.200 V22.400 H590.200" stroke="#388A34"/><rect x="628.500" y="16" width="18" height="17.600" rx="1.500" stroke="#A1260D"/></svg>
<div class="abs" style="left:629px;top:1409px;width:1919px;height:507px;background:#F6FAFE;border-top:1px solid #0F4A85"></div>
<div class="t" style="left:663.40px;top:1430.00px;font-size:19.25px;line-height:25px;color:#292929;transform:scaleX(0.8750);transform-origin:0 50%;">PROBLEMS</div>
<div class="t" style="left:799.70px;top:1430.00px;font-size:19.25px;line-height:25px;color:#292929;transform:scaleX(0.8997);transform-origin:0 50%;">OUTPUT</div>
<div class="t" style="left:913.80px;top:1430.00px;font-size:19.25px;line-height:25px;color:#292929;transform:scaleX(0.8866);transform-origin:0 50%;">DEBUG CONSOLE</div>
<div class="t" style="left:1105.20px;top:1430.00px;font-size:19.25px;line-height:25px;color:#292929;transform:scaleX(0.9226);transform-origin:0 50%;">TERMINAL</div>
<div class="t" style="left:1237.20px;top:1430.00px;font-size:19.25px;line-height:25px;color:#292929;transform:scaleX(0.8353);transform-origin:0 50%;">PORTS</div>
<div class="abs" style="left:1101px;top:1413.5px;width:97.5px;height:54.5px;box-sizing:border-box;border:1px solid #006BBD"></div>
<div class="abs" style="left:1102.5px;top:1462.5px;width:94.5px;height:1.6px;background:#B5200D"></div>
<svg class="abs" style="left:2334px;top:1425.3px" width="30" height="30" viewBox="0 0 30 30" stroke="#292929" stroke-width="1.9" fill="none"><path d="M15 4 V26 M4 15 H26"/></svg>
<svg class="abs" style="left:2368.8px;top:1434.3px" width="18" height="14" viewBox="0 0 18 14" stroke="#292929" stroke-width="1.7" fill="none"><path d="M3 3.500 L9 9.500 L15 3.500"/></svg>
<svg class="abs" style="left:2404px;top:1436.3px" width="28" height="8" viewBox="0 0 28 8" fill="#292929"><circle cx="5" cy="4" r="1.9"/><circle cx="14" cy="4" r="1.9"/><circle cx="23" cy="4" r="1.9"/></svg>
<svg class="abs" style="left:2451px;top:1431.3px" width="26" height="18" viewBox="0 0 26 18" stroke="#292929" stroke-width="1.8" fill="none"><path d="M3 14 L13 4 L23 14"/></svg>
<svg class="abs" style="left:2498.5px;top:1429.3px" width="22" height="22" viewBox="0 0 22 22" stroke="#292929" stroke-width="1.8" fill="none"><path d="M3 3 L19 19 M19 3 L3 19"/></svg>
<div class="tl m" style="top:1497.80px">(langchain_env) <span class="g">huangj@ihpc-ci-aai-013</span>:<span class="pb">~/01_LangChain/LangChainCHSample</span>$  cd /home/huangj/01_LangChain/LangChai</div>
<div class="tl m" style="top:1527.75px">nCHSample ; /usr/bin/env /home/huangj/01_LangChain/langchain_env/bin/python3 /home/huangj/.vscode-server/extens</div>
<div class="tl m" style="top:1557.70px">ions/ms-python.python-2023.12.0/pythonFiles/lib/python/debugpy/adapter/../../debugpy/launcher 36667 -- /home/hu</div>
<div class="tl m" style="top:1587.65px">angj/01_LangChain/LangChainCHSample/07_02_Agent_ReAct.py</div>
<div class="tl m" style="top:1677.50px"><span style="font-weight:bold">&gt; Entering new AgentExecutor chain...</span></div>
<div class="tl m" style="top:1707.45px"><span class="gi"> I need to find the current market price of roses and then calculate the new price with a 15% markup.</span></div>
<div class="tl m" style="top:1737.40px"><span class="gi">Action: Search</span></div>
<div class="tl m" style="top:1767.35px"><span class="gi">Action Input: "Average price of roses"</span></div>
<div class="tl m" style="top:1797.30px">Observation: <span class="ci">The average price for a dozen roses in the U.S. is $80.16. The state where a dozen roses cost the </span></div>
<div class="tl m" style="top:1827.25px"><span class="ci">most is Hawaii at $108.33. That's 35% more expensive than the national average. A dozen roses are most affordab</span></div>
<div class="tl m" style="top:1857.20px"><span class="ci">le in Pennsylvania, costing $66.15 on average.</span></div>
<div class="tl m" style="top:1887.15px">Thought:</div>
<div class="abs" style="left:769.2px;top:1889.1px;width:12px;height:26px;box-sizing:border-box;border:1.5px solid #292929"></div>
<div class="abs" style="left:2144px;top:1470px;width:1px;height:446px;background:#0F4A85"></div>
<div class="abs" style="left:2146px;top:1547px;width:402px;height:38.5px;background:#E1E8F1;box-sizing:border-box;border:1px dotted #006BBD"></div>
<svg class="abs" style="left:2161.5px;top:1474.0px" width="30" height="32" viewBox="0 0 30 32"><path d="M15 2.500 L26 8.500 V23 L15 29.500 L4 23 V8.500 Z" fill="none" stroke="#7a7a7a" stroke-width="1.100" stroke-linejoin="round"/><path d="M26 8.500 L15 15 V29.500 L26 23 Z" fill="#292929"/><text x="17.500" y="25" font-size="9" font-weight="bold" fill="#fff" font-family="Liberation Sans, sans-serif" transform="skewY(-30) translate(0,10.500)">$</text></svg>
<svg class="abs" style="left:2161.5px;top:1513.3px" width="30" height="32" viewBox="0 0 30 32"><path d="M15 2.500 L26 8.500 V23 L15 29.500 L4 23 V8.500 Z" fill="none" stroke="#7a7a7a" stroke-width="1.100" stroke-linejoin="round"/><path d="M26 8.500 L15 15 V29.500 L26 23 Z" fill="#292929"/><text x="17.500" y="25" font-size="9" font-weight="bold" fill="#fff" font-family="Liberation Sans, sans-serif" transform="skewY(-30) translate(0,10.500)">$</text></svg>
<svg class="abs" style="left:2160px;top:1550px" width="36" height="34" viewBox="2160 1550 36 34" fill="none" stroke="#292929" stroke-width="1.600"><ellipse cx="2177.800" cy="1568.200" rx="7.300" ry="9.100"/><path d="M2172.500 1560.800 A5.400 6.200 0 0 1 2183.200 1560.800"/><path d="M2168.700 1556.300 L2172.300 1560 M2188.700 1556.300 L2185.100 1560 M2164.100 1568.200 H2170.500 M2185.100 1568.200 H2191.100 M2166.800 1579.200 L2171.400 1574.600 M2187.800 1579.200 L2183.300 1574.600 M2173.200 1564.500 L2182.400 1574.600 M2182.400 1564.500 L2173.200 1574.600"/></svg>
<div class="t" style="left:2198.70px;top:1476.00px;font-size:22px;line-height:29px;color:#292929;transform:scaleX(0.9642);transform-origin:0 50%;">bash</div>
<div class="t" style="left:2256.00px;top:1479.50px;font-size:19.6px;line-height:25px;color:#666666;transform:scaleX(0.9896);transform-origin:0 50%;">LangChainCHSample</div>
<div class="t" style="left:2198.70px;top:1515.30px;font-size:22px;line-height:29px;color:#292929;transform:scaleX(1.0030);transform-origin:0 50%;">Python</div>
<div class="t" style="left:2279.30px;top:1518.80px;font-size:19.6px;line-height:25px;color:#666666;transform:scaleX(0.9869);transform-origin:0 50%;">LangChainCHSample</div>
<div class="t" style="left:2198.70px;top:1553.00px;font-size:22px;line-height:29px;color:#292929;transform:scaleX(1.0156);transform-origin:0 50%;">Python Debug Console</div>
<div class="abs" style="left:0;top:0;width:78px;height:1916px;background:#F6FAFE;border-right:1.2px solid #0F4A85"></div>
<svg class="abs" style="left:0;top:0" width="78" height="1916" viewBox="0 0 78 1916" fill="none" stroke="#1F1F1F" stroke-width="2.600" stroke-linejoin="round"><circle cx="42.700" cy="53.400" r="13.100"/><path d="M33.400 62.700 L19.200 79"/><circle cx="27.800" cy="129.200" r="5.200"/><circle cx="46.600" cy="137.300" r="5.200"/><circle cx="27.800" cy="158.400" r="5.200"/><path d="M27.800 134.400 V153.200"/><path d="M46.200 142.500 C45.500 146.500 43.500 147.500 40 147.500 H33.500 C30 147.500 28.300 149.500 27.800 153.200"/><path d="M30.400 226 V207.700 L56.800 224.400 L51.800 227.500"/><ellipse cx="25.900" cy="238.700" rx="6.100" ry="9.200"/><path d="M20 235.700 H32" /><path d="M16.300 231.600 L20.200 235 M35.600 231.600 L31.800 235 M15.800 240 H19.500 M16.300 248 L20.200 244.300" stroke-width="2.300"/><path d="M19.300 300.400 H31 Q33 300.400 33 302.400 V315.900 H46.600 Q48.600 315.900 48.600 317.900 V329.800 Q48.600 331.800 46.600 331.800 H19.300 Q17.300 331.800 17.300 329.800 V302.400 Q17.300 300.400 19.300 300.400 Z"/><path d="M17.300 315.900 H33 V331.800"/><rect x="40.700" y="292.300" width="16" height="15.400" rx="2.200"/><path d="M53.700 394.500 V380.200 H18.500 V407.600 H33.300"/><path d="M33.600 407 V413" stroke-width="1.600"/><path d="M25.300 412.900 H35.500" stroke-width="2"/><circle cx="47.050" cy="406" r="9.600"/><path d="M43 404.200 L45.600 407.400 L43 410.600 M52.600 402 L49.900 405 L52.600 407.900" stroke-width="1.900"/><path d="M29 463 H45"/><path d="M33 463 V475.100 L22.800 494.600 Q21.800 496.800 24 496.800 H50 Q52.200 496.800 51.200 494.600 L41 475.100 V463"/><path d="M27.500 486.500 H46.500"/><circle cx="37.050" cy="1794" r="19.700"/><circle cx="36.950" cy="1789.900" r="8.300"/><path d="M24.600 1808.500 C27 1795.500 47 1795.500 49.500 1808.500"/><path d="M34.70 1858.44 L39.30 1858.44 L39.86 1864.60 L44.38 1866.47 L49.13 1862.51 L52.39 1865.77 L48.43 1870.52 L50.30 1875.04 L56.46 1875.60 L56.46 1880.20 L50.30 1880.76 L48.43 1885.28 L52.39 1890.03 L49.13 1893.29 L44.38 1889.33 L39.86 1891.20 L39.30 1897.36 L34.70 1897.36 L34.14 1891.20 L29.62 1889.33 L24.87 1893.29 L21.61 1890.03 L25.57 1885.28 L23.70 1880.76 L17.54 1880.20 L17.54 1875.60 L23.70 1875.04 L25.57 1870.52 L21.61 1865.77 L24.87 1862.51 L29.62 1866.47 L34.14 1864.60 Z" stroke-linejoin="miter"/><circle cx="37" cy="1877.900" r="4.500"/></svg>
<div class="abs" style="left:34.0px;top:227.8px;width:30.8px;height:30.8px;border-radius:50%;background:#0F4A85"></div>
<div class="t" style="left:0.00px;top:233.60px;font-size:15px;line-height:20px;font-weight:bold;color:#FFFFFF;left:34px;width:30.800px;text-align:center;">1</div>
</body></html>
